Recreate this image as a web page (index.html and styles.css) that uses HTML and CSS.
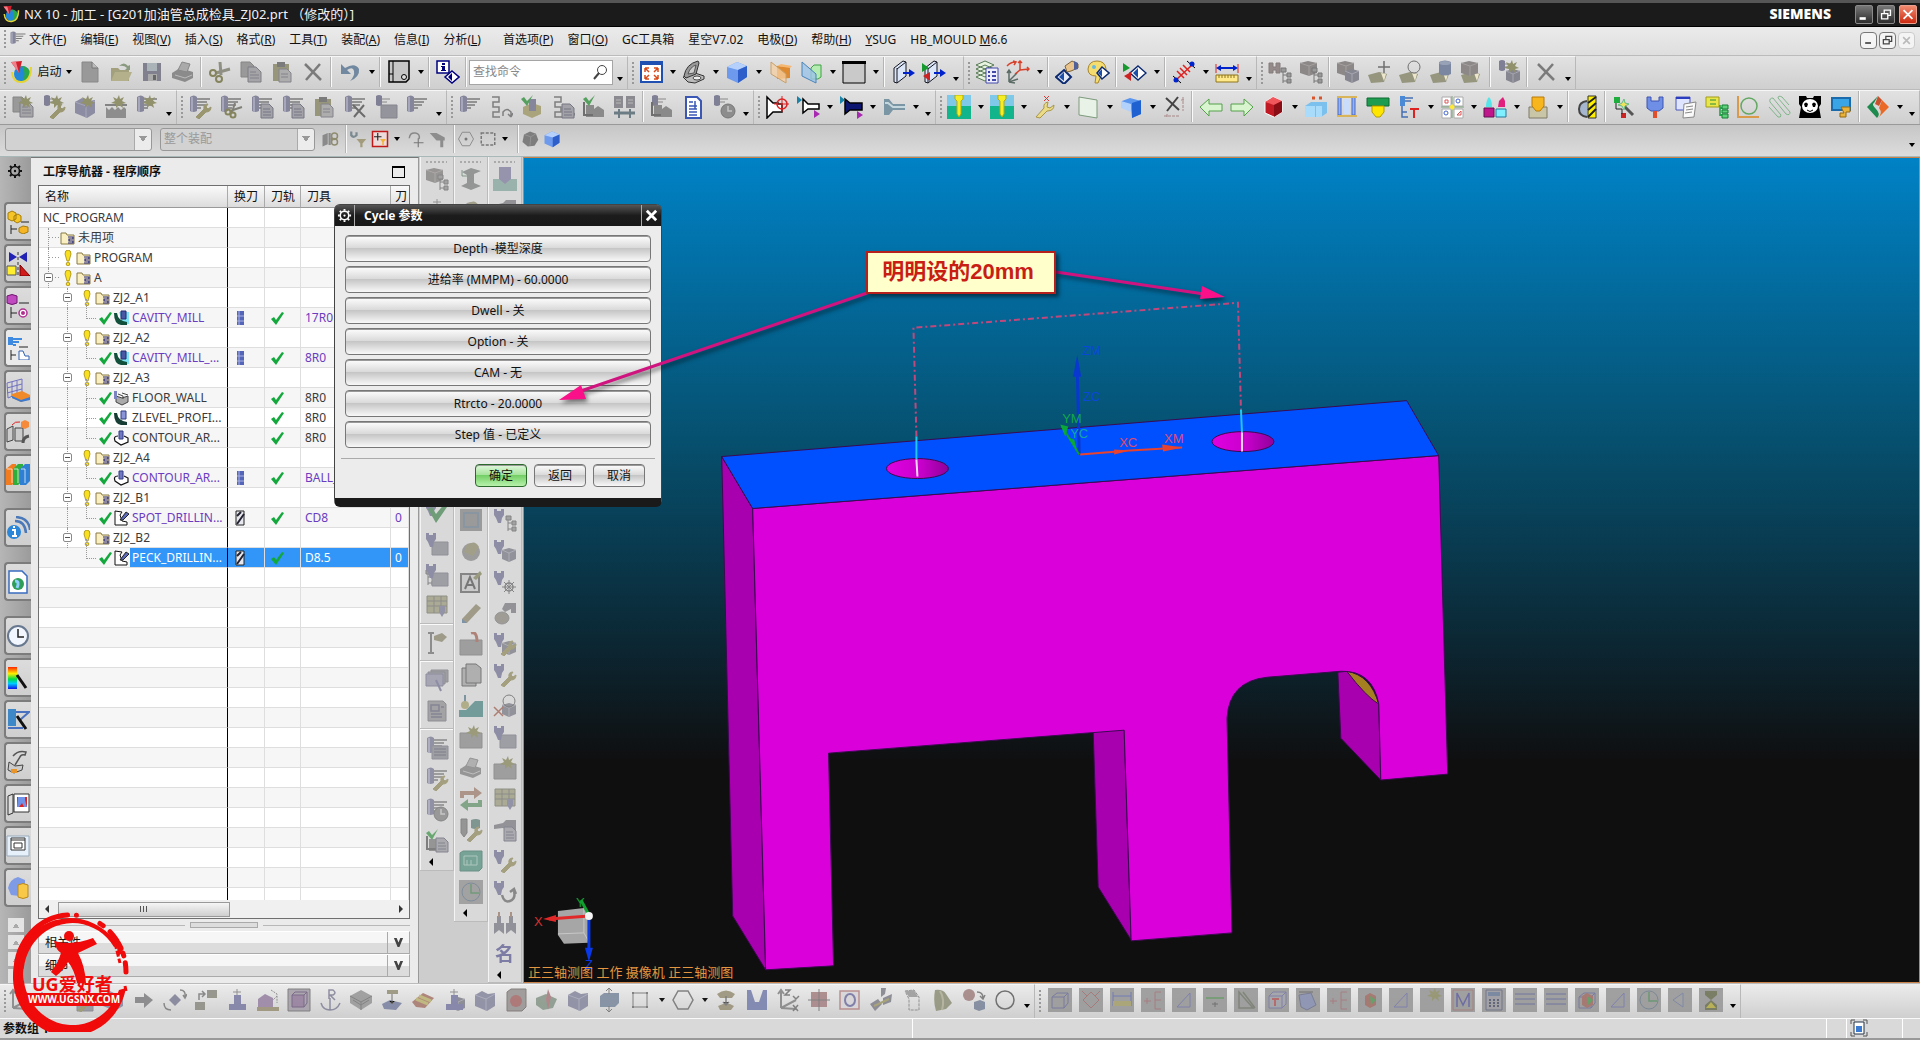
FILE: index.html
```html
<!DOCTYPE html>
<html lang="zh-CN">
<head>
<meta charset="utf-8">
<title>NX 10 - 加工</title>
<link rel="stylesheet" href="styles.css">
</head>
<body>

<!-- icon parts, several can be stacked in one svg -->
<svg class="defs" aria-hidden="true">
<defs>
<linearGradient id="sky" x1="0" y1="0" x2="0" y2="1"><stop offset="0" stop-color="#0082c6"/><stop offset=".34" stop-color="#06506f"/><stop offset=".73" stop-color="#0f0f10"/><stop offset="1" stop-color="#0f0f0f"/></linearGradient>
<linearGradient id="hole" x1="0" y1="0" x2="1" y2="0"><stop offset="0" stop-color="#e000e0"/><stop offset=".55" stop-color="#c800cc"/><stop offset="1" stop-color="#90009a"/></linearGradient>
<linearGradient id="rainbow" x1="0" y1="0" x2="0" y2="1"><stop offset="0" stop-color="#f20"/><stop offset=".3" stop-color="#fe0"/><stop offset=".55" stop-color="#0d4"/><stop offset=".75" stop-color="#0cf"/><stop offset="1" stop-color="#11e"/></linearGradient>

<symbol id="nx" viewBox="0 0 24 24"><circle cx="13" cy="14" r="8" fill="#2488d8"/><path d="M13 6a8 8 0 0 1 0 16q5-8 0-16z" fill="#2aa84a"/><path d="M3 12q1 11 10 10T22 7" fill="none" stroke="#e6d437" stroke-width="2"/><path d="M2 2l11-1-3 12z" fill="#d11f2b"/><path d="M2 2l5 0 3 11z" fill="#f0808a"/></symbol>
<symbol id="new" viewBox="0 0 24 24"><path d="M4 2h10l6 6v14H4z" fill="#999" stroke="#888"/><path d="M14 2v6h6" fill="#bbb" stroke="#777"/></symbol>
<symbol id="open" viewBox="0 0 24 24"><path d="M2 8h7l2 2h9v11H2z" fill="#a3a07e"/><path d="M2 21l4-9h17l-4 9z" fill="#b3b08b"/><path d="M10 6q5-5 9 0l2-1v5h-5l2-2q-3-3-8-2z" fill="#8a9a80"/></symbol>
<symbol id="save" viewBox="0 0 24 24"><path d="M3 3h18v18H3z" fill="#80808e"/><path d="M7 3h10v8H7z" fill="#aab4b8"/><path d="M8 14h9v7H8z" fill="#aaa"/><path d="M13 15h3v5h-3z" fill="#666"/></symbol>
<symbol id="print" viewBox="0 0 24 24"><path d="M1 13l8-5 13 4v6l-8 4-13-4z" fill="#8b8b8b"/><path d="M7 10l4-8 8 2-3 8z" fill="#aaa" stroke="#888"/><path d="M4 15l10 3 7-3" stroke="#bbb" fill="none"/></symbol>
<symbol id="cut" viewBox="0 0 24 24"><path d="M12 2l1 13M22 9L8 13" stroke="#8f8f84" stroke-width="3"/><circle cx="5" cy="13" r="3" fill="none" stroke="#85845f" stroke-width="2"/><circle cx="11" cy="19" r="3" fill="none" stroke="#85845f" stroke-width="2"/></symbol>
<symbol id="copy" viewBox="0 0 24 24"><path d="M2 2h9l4 4v11H2z" fill="#999" stroke="#858585"/><path d="M9 7h8l5 5v10H9z" fill="#a5a5a8" stroke="#7d7d85"/><path d="M11 12h6M11 15h9M11 18h9" stroke="#80808a"/></symbol>
<symbol id="paste" viewBox="0 0 24 24"><path d="M3 4h16v17H3z" fill="#98967a"/><path d="M7 2h8v5H7z" fill="#7b7b7b"/><path d="M9 9h8l4 4v9H9z" fill="#adadad" stroke="#84848c"/><path d="M11 14h7M11 17h7" stroke="#84848c"/></symbol>
<symbol id="del" viewBox="0 0 24 24"><path d="M4 4l16 16M19 4L5 20" stroke="#7b7b7b" stroke-width="2.500"/></symbol>
<symbol id="undo" viewBox="0 0 24 24"><path d="M3 4v10h10L9 10q6-4 7 1 1 5-4 10 10-4 9-12Q17 2 7 8z" fill="#7189a0"/></symbol>
<symbol id="role" viewBox="0 0 24 24"><path d="M2 1h20v18l-3 3H2z" fill="#c6c6c6" stroke="#000" stroke-width="1.500"/><path d="M6 1v21M2 14h4" stroke="#000"/><circle cx="17" cy="17" r="2.500" fill="#ddd" stroke="#000"/></symbol>
<symbol id="info" viewBox="0 0 24 24"><path d="M1 1h12v12H1z" fill="#fff" stroke="#00007f" stroke-width="1.500"/><path d="M6 3h3v2H6zM5 6h4v4h1v1H5v-1h1V7H5z" fill="#00007f"/><path d="M16 11l7 6-7 6-7-6z" fill="#fff" stroke="#00007f" stroke-width="1.500"/><path d="M16 13v8l-4-4z" fill="#00007f"/></symbol>
<symbol id="fit" viewBox="0 0 24 24"><path d="M2 2h21v20H2z" fill="#fff" stroke="#1f4fb0" stroke-width="2"/><path d="M1 1h23v4H1z" fill="#1f4fb0"/><path d="M6 8h4M6 8v4M19 8h-4M19 8v4M6 19h4M6 19v-4M19 19h-4M19 19v-4M6 8l4 4M19 8l-4 4M6 19l4-4M19 19l-4-4" stroke="#d84a1a" stroke-width="1.500"/></symbol>
<symbol id="orient" viewBox="0 0 24 24"><path d="M1 17l12-4 9 3v3l-9 4-7-1z" fill="#bbb" stroke="#333"/><path d="M2 16Q4 4 16 1l1 2-3 11-10 4z" fill="#999" stroke="#333"/><path d="M6 14q2-7 8-9l-2 8z" fill="#ccc" stroke="#555"/><ellipse cx="15" cy="18" rx="4" ry="2" fill="#eee" stroke="#444"/></symbol>
<symbol id="cube" viewBox="0 0 24 24"><path d="M2 7l10-5 10 4v11l-9 6-11-5z" fill="#6d9aec"/><path d="M2 7l11 3 9-4-10-4z" fill="#b5d0fb"/><path d="M13 10l9-4v11l-9 6z" fill="#2e5ec9"/></symbol>
<symbol id="planeo" viewBox="0 0 24 24"><path d="M9 6l13 1v11l-13 1z" fill="#dd8a30"/><path d="M9 6l4-2 11 2-2 2z" fill="#f4b873"/><path d="M3 2l15 12v9L3 14z" fill="#f5cfa0" fill-opacity=".75" stroke="#c9a06a"/></symbol>
<symbol id="planeg" viewBox="0 0 24 24"><path d="M12 8l3-3h7v12l-3 2h-7z" fill="#b4ecb2" stroke="#3fa047"/><path d="M3 2l14 12v9L3 16z" fill="#9cc4e8" fill-opacity=".8" stroke="#4a83b8"/></symbol>
<symbol id="wbox" viewBox="0 0 24 24"><path d="M1 2h22v21H1z" fill="#c9c9c9" stroke="#000"/><path d="M0 1h24v3H0z" fill="#000"/></symbol>
<symbol id="door" viewBox="0 0 24 24"><path d="M3 8l9-7 3 1v14l-9 7-3-1z" fill="#dbe6f8" stroke="#14141e"/><path d="M6 8v15M6 9l9-7" stroke="#14141e" fill="none"/><path d="M12 13h8" stroke="#0022cc" stroke-width="2"/><path d="M18 9l6 4-6 4z" fill="#0022cc"/></symbol>
<symbol id="rg" viewBox="0 0 24 24"><path d="M0 3l7 5-7 4z" fill="#169a2e"/><path d="M8 12v9l-7-5z" fill="#c22"/></symbol>
<symbol id="layers" viewBox="0 0 24 24"><path d="M1 5l9-4 9 4-9 4zM1 9l9-4 9 4-9 4zM1 13l9-4 9 4-9 4zM1 17l9-4 9 4-9 4z" fill="#e8f3e0" stroke="#577a55"/><path d="M11 8h12v15H11z" fill="#eef" stroke="#4449a8"/><path d="M13 12h2M17 12h4M13 16h2M17 16h4M13 20h2M17 20h4" stroke="#4449a8" stroke-width="2"/></symbol>
<symbol id="csys" viewBox="0 0 24 24"><path d="M3 22V11M3 22l9-3M3 22l6 1M1 13l2-3 2 3M3 21l8-8" stroke="#5b6b66" stroke-width="1.500" fill="none"/><path d="M14 10V1M14 10l9-1M14 10l-5 4M12 3l2-2 2 2M21 7l2 2-2 2M1 6q4-4 8-4M7 1l3 1-2 3" stroke="#d8412b" stroke-width="1.500" fill="none"/></symbol>
<symbol id="diam" viewBox="0 0 24 24"><path d="M15 6l8 7-8 7-8-7z" fill="#fff" stroke="#0b2a70" stroke-width="1.500"/><path d="M15 8v10l-5-5z" fill="#1d4ea8"/></symbol>
<symbol id="handd" viewBox="0 0 24 24"><path d="M9 10l7 7-7 7-8-7z" fill="#e6edf8" stroke="#0b2a70" stroke-width="2"/><path d="M9 12v9l-5-4z" fill="#1d4ea8"/><path d="M10 6l7-5 6 3v4l-7 3-4 1z" fill="#e9c48c" stroke="#7d6136"/><path d="M19 1l4 2v6l-4 1z" fill="#51629a"/></symbol>
<symbol id="head" viewBox="0 0 24 24"><path d="M2 9q1-8 9-8t9 8q0 5-5 7l-3 7H9l1-7q-8 0-8-7z" fill="#f5dc6e" stroke="#a7852d"/><path d="M16 7l7 6-7 6-5-6z" fill="#fff" stroke="#0b2a70" stroke-width="1.500"/><path d="M16 9v8l-4-4z" fill="#1d4ea8"/><circle cx="8" cy="7" r="2" fill="#68b9e0"/></symbol>
<symbol id="dist" viewBox="0 0 24 24"><path d="M4 20L20 5" stroke="#d22" stroke-width="1.500"/><path d="M5 11l7 7M8 8l7 7M11 5l7 7" stroke="#d22" stroke-width="1.500"/><path d="M1 16l8 7M15 1l8 7" stroke="#000"/><circle cx="4" cy="20" r="2.500" fill="#0022cc"/><circle cx="20" cy="4" r="2.500" fill="#0022cc"/></symbol>
<symbol id="ruler" viewBox="0 0 24 24"><path d="M1 4v9M23 4v9" stroke="#d22"/><path d="M3 8h18" stroke="#0022cc" stroke-width="2"/><path d="M1 8l5-3v6zM23 8l-5-3v6z" fill="#0022cc"/><path d="M1 15h22v7H1z" fill="#ffe98a" stroke="#8d741c"/><path d="M4 15v3M7 15v3M10 15v3M13 15v3M16 15v3M19 15v3" stroke="#8d741c"/></symbol>

<symbol id="star" viewBox="0 0 24 24"><path d="M15 0l1 4 4-2-2 4 4 2-4 1 1 4-4-3-3 3v-4l-5-1 4-2-2-4 4 2z" fill="#91916c"/></symbol>
<symbol id="tool" viewBox="0 0 24 24"><path d="M2 2q4-3 7 0v14q-4 2-7 0z" fill="#85859c"/><path d="M4 2v15" stroke="#a7a7bb" stroke-width="2"/><path d="M9 4h13M9 7h10M9 10h8M9 13h4" stroke="#7b7b7b" stroke-width="1.500"/></symbol>
<symbol id="tools" viewBox="0 0 24 24"><path d="M2 1q3-2 6 0v9q-3 2-6 0z" fill="#7f7f96"/><path d="M8 4h8M8 7h5" stroke="#888"/></symbol>
<symbol id="box" viewBox="0 0 24 24"><path d="M7 10h16v13H7z" fill="#94949c" stroke="#85858e"/></symbol>
<symbol id="lines" viewBox="0 0 24 24"><path d="M9 13h12M9 16h12M9 19h12" stroke="#70707a"/></symbol>
<symbol id="dcs" viewBox="0 0 24 24"><path d="M11 9h8l4 4v10H11z" fill="#a2a2a8" stroke="#777784"/><path d="M13 14h7M13 17h8M13 20h8" stroke="#777784"/></symbol>
<symbol id="clk" viewBox="0 0 24 24"><circle cx="16" cy="16" r="7" fill="#8d8d8d" stroke="#777"/><path d="M16 11v5h4" stroke="#c4c4c4" fill="none" stroke-width="1.500"/></symbol>
<symbol id="wr" viewBox="0 0 24 24"><path d="M8 22l8-8q-1-5 4-5l-2 3 2 2 3-2q0 5-5 5l-7 7z" fill="#9a9670" stroke="#9a9670"/></symbol>
<symbol id="scs" viewBox="0 0 24 24"><path d="M16 8l-3 9M23 12l-12 4" stroke="#808078" stroke-width="2"/><circle cx="9" cy="17" r="2.500" fill="none" stroke="#85845f" stroke-width="2"/><circle cx="14" cy="20" r="2.500" fill="none" stroke="#85845f" stroke-width="2"/></symbol>
<symbol id="xs" viewBox="0 0 24 24"><path d="M10 10l12 12M21 10L11 22" stroke="#6c6c6c" stroke-width="2"/></symbol>
<symbol id="xr" viewBox="0 0 24 24"><path d="M1 13l9 9M10 13l-9 9" stroke="#a86f62" stroke-width="1.500"/></symbol>
<symbol id="chk" viewBox="0 0 24 24"><path d="M1 4l3-2 3 4 6-6-6 11z" fill="#55a05e"/></symbol>
<symbol id="chkb" viewBox="0 0 24 24"><path d="M3 8l4-2 4 7 9-11 2 4-11 16z" fill="#5d9368"/></symbol>
<symbol id="holder" viewBox="0 0 24 24"><path d="M1 1h3v2h4V1h3v6l-2 3-1 5H5l-2-5-2-3z" fill="#80809e"/></symbol>
<symbol id="tree" viewBox="0 0 24 24"><path d="M3 9v13M3 14h4M3 20h4" stroke="#777" fill="none"/><path d="M1 7h5v4H1zM7 12h4v4H7zM7 18h4v4H7z" fill="#999" stroke="#777"/></symbol>
<symbol id="treer" viewBox="0 0 24 24"><path d="M15 11v12M15 15h4M15 21h4" stroke="#777" fill="none"/><path d="M13 8h5v4h-5zM19 13h4v4h-4zM19 19h4v4h-4z" fill="#999" stroke="#777"/></symbol>
<symbol id="blk" viewBox="0 0 24 24"><path d="M1 3l8-2 9 2v10l-8 3-9-3z" fill="#8c8888"/><path d="M1 3l9 3 8-3M10 6v10" stroke="#a5a0a0" fill="none"/></symbol>
<symbol id="blkr" viewBox="0 0 24 24"><path d="M9 11l7-2 7 2v9l-7 3-7-3z" fill="#868690"/><path d="M9 11l7 3 7-3M16 14v9" stroke="#a6a6b0" fill="none"/></symbol>
<symbol id="duo" viewBox="0 0 24 24"><path d="M1 3h4v4h3V3h4v10H8v-3H5v3H1z" fill="#948a8a" stroke="#857c7c"/></symbol>
<symbol id="tag" viewBox="0 0 24 24"><path d="M1 15l11-3 8 2-3 8-13 1z" fill="#96957e"/><path d="M14 13l5 1-2 7z" fill="#ece6cc"/></symbol>
<symbol id="plus" viewBox="0 0 24 24"><path d="M17 1v12M11 7h12" stroke="#707070" stroke-width="1.500"/></symbol>
<symbol id="circ" viewBox="0 0 24 24"><circle cx="16" cy="7" r="6" fill="none" stroke="#707070"/></symbol>
<symbol id="cyl" viewBox="0 0 24 24"><path d="M10 2q6-3 12 0v12q-6 3-12 0z" fill="#7b86a0"/><ellipse cx="16" cy="3" rx="6" ry="2" fill="#98a2b6"/></symbol>
<symbol id="snake" viewBox="0 0 24 24"><path d="M3 2h7v5H4v5h6v5H4v5h7M14 21v-4q4-5 8 0v4M22 22l-3-3M22 22l2-4" stroke="#7f7f7f" stroke-width="1.500" fill="none"/></symbol>
<symbol id="arch" viewBox="0 0 24 24"><path d="M3 12l9-4 9 3v8l-9 4-9-4z" fill="#aaa47c"/><path d="M9 4h7v12H9z" fill="#85859c"/></symbol>
<symbol id="saw" viewBox="0 0 24 24"><path d="M2 12l3 3 3-3 3 3 3-3 3 3 3-3 2 2v9H2z" fill="#8d8d8d"/><path d="M1 10h22" stroke="#666" stroke-width="1.500"/></symbol>
<symbol id="mach" viewBox="0 0 24 24"><path d="M4 10h8v4l4-3 6 4v7H4z" fill="#8a8a8a"/><path d="M2 7v13h9" stroke="#6f6f6f" fill="none" stroke-width="2"/></symbol>
<symbol id="docs2" viewBox="0 0 24 24"><path d="M1 1h9v12H1zM13 1h9v12h-9z" fill="#8a8a90"/><path d="M3 5h5M3 8h5M15 5h5M15 8h5" stroke="#b8b8b8"/><path d="M1 18h21" stroke="#6c7c84" stroke-width="3"/><path d="M6 14v9M17 14v9" stroke="#6c7c84" stroke-width="2"/></symbol>
<symbol id="docb" viewBox="0 0 24 24"><path d="M5 2h11l4 4v17H5z" fill="#fff" stroke="#3a57b5" stroke-width="2"/><path d="M8 7h4M8 11h8M8 14h8M8 17h8M8 20h8M14 6v8" stroke="#3a57b5" stroke-width="1.500"/></symbol>
<symbol id="funnel" viewBox="0 0 24 24"><path d="M2 2v21l6-6h9V9h-4V8H8z" fill="#fff" stroke="#000" stroke-width="1.500"/></symbol>
<symbol id="target" viewBox="0 0 24 24"><circle cx="17" cy="9" r="5" fill="none" stroke="#d22" stroke-width="1.500"/><path d="M17 1v16M9 9h15" stroke="#d22"/></symbol>
<symbol id="funnel2" viewBox="0 0 24 24"><path d="M7 4v14l5-4h11V9H12z" fill="#fff" stroke="#000" stroke-width="1.500"/><path d="M1 1l5 4-5 4z" fill="#1a83a8"/><path d="M18 15l6 4-6 4z" fill="#a92ab2"/></symbol>
<symbol id="funnel3" viewBox="0 0 24 24"><path d="M6 4v15l5-4h12V8H11z" fill="#0c1670" stroke="#000" stroke-width="1.500"/><path d="M1 1l5 4-5 4z" fill="#1a83a8"/><path d="M18 16l6 4-6 4z" fill="#a92ab2"/></symbol>
<symbol id="spind" viewBox="0 0 24 24"><path d="M2 4h5l4 5h12v6H11l-4 5H2z" fill="#7a95a3"/><path d="M3 8h3l5 4h12" stroke="#c6d8df" stroke-width="2" fill="none"/></symbol>
<symbol id="drill" viewBox="0 0 24 24"><path d="M0 0h24v11H0z" fill="#7ec8ea"/><path d="M0 11h24v13H0z" fill="#12b58b"/><path d="M8 0h8v4l-2 2v13l-2 3-2-3V6L8 4z" fill="#f5ee25" stroke="#b8a90c"/></symbol>
<symbol id="wry" viewBox="0 0 24 24"><path d="M3 22l8-9q-1-5 4-6l-1 5 3 1 4-3q0 6-7 6l-7 7z" fill="#eadb86" stroke="#a8954a"/><path d="M11 1l5 5M16 1l-5 5" stroke="#d33"/></symbol>
<symbol id="panel" viewBox="0 0 24 24"><path d="M3 2l18 3v18l-18-3z" fill="#e8f2e6" stroke="#7d9a7d"/></symbol>
<symbol id="shapes" viewBox="0 0 24 24"><path d="M3 6l8-3 11 3v13l-9 4-1-9-9-3z" fill="#5a95ee"/><path d="M13 8l9-3v14l-9 4z" fill="#1f61d0"/><path d="M2 6l10 3v8l-10-4z" fill="#b3d2fb"/></symbol>
<symbol id="nox" viewBox="0 0 24 24"><path d="M4 3l13 12M16 2L5 16" stroke="#444" stroke-width="2"/><path d="M21 2v14M19 5h4M2 21h16M5 19v4" stroke="#a88" stroke-dasharray="3 1"/></symbol>
<symbol id="arrl" viewBox="0 0 24 24"><path d="M1 12l9-8v5h13v7H10v5z" fill="#d9f5cf" stroke="#55a04a"/></symbol>
<symbol id="arrr" viewBox="0 0 24 24"><path d="M23 12l-9-8v5H1v7h13v5z" fill="#d9f5cf" stroke="#55a04a"/></symbol>
<symbol id="cuber" viewBox="0 0 24 24"><path d="M4 7l8-5 9 4v11l-8 5-9-4z" fill="#c11a24" stroke="#fff"/><path d="M4 7l9 3 8-4-9-4z" fill="#f0565c"/><path d="M13 10l8-4v11l-8 5z" fill="#8a0c14"/></symbol>
<symbol id="boxb" viewBox="0 0 24 24"><path d="M1 11l6-4h16v11l-6 4H1z" fill="#7cc0ee"/><path d="M1 11h10v11H1zM12 11h6v11h-6z" fill="#a9dcfa"/><path d="M8 3h3M15 3h3" stroke="#d9542b" stroke-width="3"/></symbol>
<symbol id="frame" viewBox="0 0 24 24"><path d="M3 2h3v18H3zM17 2h3v18h-3z" fill="#8eb4f2" stroke="#4a66c9"/><path d="M2 2h20M2 21h20" stroke="#d8b45a" stroke-width="2"/><path d="M9 4h6v15H9z" fill="#c9dcfb"/></symbol>
<symbol id="mill" viewBox="0 0 24 24"><path d="M1 3h22v8H1z" fill="#1e9c50" stroke="#0e6a33"/><path d="M6 11h12v6l-4 5h-4l-4-5z" fill="#ffe600" stroke="#b49c00"/></symbol>
<symbol id="tooly" viewBox="0 0 24 24"><path d="M3 1h5v10H3z" fill="#4a89d6"/><path d="M8 3h8M8 6h6M5 11v11h6M5 17h5" stroke="#4570b5" fill="none" stroke-width="1.500"/><path d="M13 14h9M17 14v9" stroke="#d22" stroke-width="2"/></symbol>
<symbol id="quad" viewBox="0 0 24 24"><path d="M2 2h9v9H2zM14 2h9v9h-9zM2 14h9v9H2zM14 14h9v9h-9z" fill="#fff" stroke="#aaa"/><path d="M5 5h3v3H5zM17 20l4-4v4z" fill="none" stroke="#d55"/><circle cx="18" cy="6" r="2" fill="none" stroke="#46c"/><circle cx="6" cy="18" r="2" fill="none" stroke="#46c"/><path d="M12 1v22M1 12h23" stroke="#7aa07a"/><path d="M12 9l3 3-3 3-3-3z" fill="#ffe93a"/></symbol>
<symbol id="pens" viewBox="0 0 24 24"><path d="M1 13h10v9H1z" fill="#c0168c" stroke="#601050"/><path d="M13 14h10v8H13z" fill="#7ff0ff" stroke="#26799a"/><path d="M3 12q0-7 3-10 3 3 3 10z" fill="#55e4ea"/><path d="M15 12l1-6 4-4 2 4v6z" fill="#e0207c"/></symbol>
<symbol id="press" viewBox="0 0 24 24"><path d="M3 12h18v11H3z" fill="#c9c6a8" stroke="#7f7b66"/><path d="M6 2h12v9l-4 5h-4l-4-5z" fill="#f7b51e" stroke="#b97a08"/></symbol>
<symbol id="hatch" viewBox="0 0 24 24"><path d="M13 1h8v22h-8z" fill="#fff000" stroke="#333"/><path d="M13 8l8-6M13 15l8-7M13 22l8-8" stroke="#222" stroke-width="2"/><path d="M12 6q-8 1-8 8t8 8" fill="#a5b6ce" stroke="#444" stroke-width="2"/></symbol>
<symbol id="wand" viewBox="0 0 24 24"><path d="M2 2h6v6H2z" fill="#1fae3e"/><path d="M9 18h5v5H9z" fill="#c22"/><path d="M4 8v6h6v5" fill="none" stroke="#222"/><path d="M12 11l9 9" stroke="#555" stroke-width="3"/><path d="M12 4l1 4 4 1-4 2-1 4-2-4-4-1 4-2z" fill="#efe35e" stroke="#6b8"/></symbol>
<symbol id="plug" viewBox="0 0 24 24"><path d="M4 2h4v4h8V2h4v11l-4 3H8l-4-3z" fill="#6f8ee6" stroke="#3e55b0"/><path d="M10 16h4v7h-4z" fill="#e04e2c"/></symbol>
<symbol id="notes" viewBox="0 0 24 24"><path d="M2 2h14v13H2z" fill="#dfe4ff" stroke="#4a56b8"/><path d="M2 3h14" stroke="#2a3cc0" stroke-width="2"/><path d="M10 9l12-2-2 15-11 1z" fill="#fafafa" stroke="#888"/><path d="M12 12l7-1M12 15l7-1M11 18l7-1" stroke="#888"/></symbol>
<symbol id="yg" viewBox="0 0 24 24"><path d="M1 2h13v10H1z" fill="#e9e64a" stroke="#a09b1a"/><path d="M5 5h6M5 9h6" stroke="#2a8a3a"/><path d="M15 10v11M15 13h3M15 20h3" stroke="#18a040" stroke-width="1.500"/><path d="M17 10h6v4h-6zM17 15h6v3h-6zM17 19h6v4h-6z" fill="#5fd07a" stroke="#128035"/></symbol>
<symbol id="ring" viewBox="0 0 24 24"><path d="M2 1v21h21" stroke="#d99a4a" stroke-width="2" fill="none"/><circle cx="13" cy="11" r="8" fill="none" stroke="#62a862" stroke-width="1.500"/></symbol>
<symbol id="coil" viewBox="0 0 24 24"><path d="M2 12l9 10q3 1 3-2L3 7q-1-4 3-4l13 16q4 2 4-2L11 3q0-3 4-1l7 8" stroke="#7fb489" fill="none"/></symbol>
<symbol id="panda" viewBox="0 0 24 24"><path d="M1 1h7l1 2h6l1-2h7v8l-2 3 2 11H1l2-11-2-3z" fill="#000"/><ellipse cx="12" cy="11" rx="8" ry="7" fill="#fff"/><path d="M6 9q2-3 4 0l-1 3H7zM14 9q2-3 4 0l-1 3h-2z" fill="#000"/><path d="M9 15q3 3 6 0" stroke="#000" fill="none"/></symbol>
<symbol id="mon" viewBox="0 0 24 24"><path d="M3 3h18v12H3z" fill="#39a5e6" stroke="#1b6aab" stroke-width="2"/><path d="M12 12h9v5h-4v5h-6v-4h4z" fill="#e9b23b" stroke="#94690f"/></symbol>
<symbol id="logo" viewBox="0 0 24 24"><path d="M12 1L1 12l10 11q4-4-1-9T8 8z" fill="#1d8a4e"/><path d="M16 5l7 7-11 11q5-5 1-10z" fill="#ea6a25"/><path d="M12 1l4 4-3 6-4-2z" fill="#c8502a"/></symbol>

<symbol id="arr" viewBox="0 0 24 24"><path d="M3 9h9V5l9 7-9 8v-5H3z" fill="#858588"/></symbol>
<symbol id="spin" viewBox="0 0 24 24"><path d="M6 12l6-6 6 6-6 6z" fill="#84849a"/><path d="M17 2q6 0 5 7M1 15q0 7 7 7M20 7l2 3 2-4" stroke="#808080" stroke-width="1.500" fill="none"/></symbol>
<symbol id="cpb" viewBox="0 0 24 24"><path d="M13 2h10v8H13zM1 14h10v8H1z" fill="#8f8f86"/><path d="M5 12V6h6M8 3l3 3-3 3" stroke="#808080" stroke-width="1.500" fill="none"/></symbol>
<symbol id="pede" viewBox="0 0 24 24"><path d="M4 16h17v6H4zM9 7h7v9H9z" fill="#8080a6"/><path d="M12 7V1M8 4h8" stroke="#888"/></symbol>
<symbol id="house" viewBox="0 0 24 24"><path d="M2 11l7-5 8 4v9H2z" fill="#9a86a6"/><path d="M1 19h22v4H1z" fill="#9c9378"/><path d="M15 2l6 4v9M21 8l-4 4" stroke="#888" fill="none" stroke-dasharray="2 1"/></symbol>
<symbol id="cage" viewBox="0 0 24 24"><path d="M1 1h22v22H1z" fill="#a6a0aa" stroke="#777"/><path d="M5 7h12v12H5z" fill="#96809e" stroke="#705f80"/><path d="M5 7l3-3h12v11l-3 4M17 7l3-3" fill="none" stroke="#705f80"/></symbol>
<symbol id="anchor" viewBox="0 0 24 24"><path d="M12 10v12M3 15q2 7 9 7t10-7M11 11V2h4q4 3 0 5h-3l5 5" stroke="#85859a" stroke-width="1.500" fill="none"/></symbol>
<symbol id="plates" viewBox="0 0 24 24"><path d="M1 8l11-6 11 6v7l-11 7-11-7z" fill="#9a9a9a"/><path d="M1 8l11 6 11-6M12 14v8M4 12l8 5 8-5" stroke="#7a7a7a" fill="none"/></symbol>
<symbol id="scan" viewBox="0 0 24 24"><path d="M2 16l8-4 12 3-6 7-12-1z" fill="#7d85a3"/><path d="M7 2h11v4H7z" fill="#98937b"/><path d="M12 6v10M9 13l3 3 3-3" stroke="#666"/></symbol>
<symbol id="ingot" viewBox="0 0 24 24"><path d="M1 14L12 5l11 5-9 10-9-1z" fill="#aa7c70"/><path d="M5 11l12 5M8 8l12 5" stroke="#bdb578" stroke-width="3"/></symbol>
<symbol id="gblk" viewBox="0 0 24 24"><path d="M2 7l7-4 6 3 7-1v13l-8 5-12-5z" fill="#8c8ca2"/><path d="M2 7l11 4 9-5M13 11v12" stroke="#a8a8bc" fill="none"/></symbol>
<symbol id="rblk" viewBox="0 0 24 24"><path d="M3 4l4-3h15v18l-4 4H3z" fill="#9a9696" stroke="#7c7474"/><circle cx="12" cy="13" r="6" fill="#a96f6f"/></symbol>
<symbol id="gcut" viewBox="0 0 24 24"><path d="M1 10l10-4 11 5-4 9-10 2-7-5z" fill="#8b9a8d"/><path d="M13 1l3 8-3 13-2-11z" fill="#ad7e82"/></symbol>
<symbol id="updn" viewBox="0 0 24 24"><path d="M3 8l4-3h15v10l-4 4H3z" fill="#7f8da0"/><path d="M12 0v6M12 18v6M9 3l3-3 3 3M9 21l3 3 3-3" stroke="#777" fill="none"/></symbol>
<symbol id="sel" viewBox="0 0 24 24"><path d="M5 5h14v14H5z" fill="none" stroke="#777"/><path d="M4 4h2v2H4zM18 4h2v2h-2zM4 18h2v2H4zM18 18h2v2h-2z" fill="#777"/></symbol>
<symbol id="hex" viewBox="0 0 24 24"><path d="M7 3h10l5 9-5 9H7l-5-9z" fill="none" stroke="#777" stroke-width="1.500"/></symbol>
<symbol id="vase" viewBox="0 0 24 24"><path d="M3 6q9-7 18 0l-3 4H6zM4 18l5-2h7l4 2-3 4H6z" fill="#9a937a"/><path d="M12 8v9M9 14l3 3 3-3" stroke="#777" stroke-width="1.500"/></symbol>
<symbol id="ublk" viewBox="0 0 24 24"><path d="M2 2h4l4 12h4l4-12h4v20H2z" fill="#7a83ae"/></symbol>
<symbol id="axes" viewBox="0 0 24 24"><path d="M5 20V3M5 20l15-8M5 20l15 1M2 6l3-4 3 4" stroke="#888" stroke-width="2" fill="none"/><path d="M9 2h5l-5 5h5M17 8l3 3 3-3M17 17l5 6M22 17l-5 6" stroke="#777" stroke-width="1.500" fill="none"/></symbol>
<symbol id="rsq" viewBox="0 0 24 24"><path d="M4 4h16v15H4z" fill="#a88688"/><path d="M12 1v22M1 12h22" stroke="#777"/></symbol>
<symbol id="osq" viewBox="0 0 24 24"><path d="M2 3h19v18H2z" fill="#d8d6d8" stroke="#b58888" stroke-width="1.500"/><ellipse cx="12" cy="12" rx="5" ry="6" fill="none" stroke="#7777a5" stroke-width="2"/></symbol>
<symbol id="junk" viewBox="0 0 24 24"><path d="M12 0h5l-1 6-4 3zM1 16l8-5 4 5-7 7zM14 10l9-4-1 8-8 3z" fill="#85858f"/><path d="M5 18l15-7" stroke="#a39e70" stroke-width="2"/></symbol>
<symbol id="wire" viewBox="0 0 24 24"><path d="M5 3l9-1 5 7v13H9V11z" fill="none" stroke="#888" stroke-dasharray="3 1"/><path d="M5 3l9-1 4 7H9z" fill="#9d9d9d"/></symbol>
<symbol id="cone" viewBox="0 0 24 24"><path d="M4 2q8-1 11 4l6 9-6 6-10 2q-3-9-1-21z" fill="#93947e"/><path d="M9 3q5 8 2 19" stroke="#b0b09a" fill="none" stroke-width="2"/></symbol>
<symbol id="conv" viewBox="0 0 24 24"><circle cx="7" cy="7" r="6" fill="#a48686"/><path d="M12 14l6-2 5 2v7l-6 2-5-2z" fill="#7d889c"/><path d="M15 4q6 0 6 6M18 8l3 3 2-4" stroke="#777" stroke-width="1.500" fill="none"/></symbol>
<symbol id="ell" viewBox="0 0 24 24"><circle cx="12" cy="12" r="9" fill="none" stroke="#666" stroke-width="1.500"/></symbol>
<symbol id="dk" viewBox="0 0 24 24"><path d="M0 0h24v24H0z" fill="#999"/></symbol>
<symbol id="pa" viewBox="0 0 24 24"><path d="M4 9h12v11H4zM4 9l5-4h11v10l-4 5M16 9l4-4" fill="none" stroke="#70709a"/></symbol>
<symbol id="pb" viewBox="0 0 24 24"><path d="M12 4l8 8-8 8-8-8zM3 3l5 5M21 3l-5 5" fill="none" stroke="#a07070"/></symbol>
<symbol id="pc" viewBox="0 0 24 24"><path d="M3 4v14M21 4v14M3 8h18" stroke="#6670b0" fill="none"/><path d="M3 13h18v5H3z" fill="#a5a170"/></symbol>
<symbol id="pd" viewBox="0 0 24 24"><path d="M3 13h7M6 10v6M14 4v17h6M14 12h6M14 4h6" stroke="#a07478" fill="none"/></symbol>
<symbol id="pe" viewBox="0 0 24 24"><path d="M5 19L18 5v14z" stroke="#7478a8" fill="none"/></symbol>
<symbol id="pf" viewBox="0 0 24 24"><path d="M3 10h18" stroke="#609460" stroke-width="1.500"/><path d="M12 14v5M9 16h6" stroke="#666"/></symbol>
<symbol id="ph" viewBox="0 0 24 24"><path d="M5 4v16h14zM9 4l12 16" fill="none" stroke="#777c70" stroke-width="1.500"/></symbol>
<symbol id="pt" viewBox="0 0 24 24"><path d="M4 8h13v12H4zM4 8l4-4h13v12l-4 4M17 8l4-4" fill="#a0a0a8" stroke="#7777a0"/><path d="M7 11h7M10 11v7" stroke="#b06060" stroke-width="2"/></symbol>
<symbol id="pn" viewBox="0 0 24 24"><path d="M3 7l12-2 5 12-9 5-6-3z" fill="#8890b0" stroke="#70748c"/><path d="M3 4h14" stroke="#666"/></symbol>
<symbol id="pp" viewBox="0 0 24 24"><path d="M7 8l5-3 6 3v9l-6 3-5-3z" fill="#a07068"/><path d="M12 8l6 4-5 5z" fill="#5b9a5e"/></symbol>
<symbol id="pm" viewBox="0 0 24 24"><path d="M2 2h20v20H2z" fill="none" stroke="#a07878"/><path d="M6 19V5l6 12 6-12v14" fill="none" stroke="#62629e" stroke-width="1.500"/></symbol>
<symbol id="pk" viewBox="0 0 24 24"><path d="M4 2h16v20H4z" fill="#9a9aa0" stroke="#666a80"/><path d="M6 4h12v4H6z" fill="#70809a"/><path d="M7 12h10M7 15h10M7 18h10" stroke="#555a70" stroke-dasharray="2 2" stroke-width="2"/></symbol>
<symbol id="pl" viewBox="0 0 24 24"><path d="M2 6h20M2 11h20M2 16h20" stroke="#666c9a"/></symbol>
<symbol id="pcl" viewBox="0 0 24 24"><circle cx="12" cy="12" r="9" fill="none" stroke="#708090"/><path d="M12 4v9h8" stroke="#60906a" fill="none" stroke-width="1.500"/></symbol>
<symbol id="ptr" viewBox="0 0 24 24"><path d="M15 5v14l-10-7z" fill="#9c9c9c" stroke="#7780a0"/></symbol>
<symbol id="hour" viewBox="0 0 24 24"><path d="M6 3h12v4l-6 5 6 5v5H6v-5l6-5-6-5z" fill="#6f7458"/><path d="M12 14l5 6H7z" fill="#b5ad4a"/></symbol>

<symbol id="mdown" viewBox="0 0 24 24"><path d="M0 12h24v12H0z" fill="#8fada5"/><path d="M6 0h12v12l-6 5-6-5z" fill="#8a88a5"/></symbol>
<symbol id="mspin" viewBox="0 0 24 24"><path d="M3 5l9-4 10 3-7 3v9l7 3-10 4-10-4 6-3V8z" fill="#888b8b"/><path d="M3 3v6h5" stroke="#6e8a78" fill="none"/></symbol>
<symbol id="sheet" viewBox="0 0 24 24"><path d="M2 2h20v17H2z" fill="#a3a28a" stroke="#848478"/><path d="M2 7h20M2 12h20M9 2v17M16 2v17" stroke="#80807c"/><path d="M14 12h6v6l-3 5-3-5z" fill="#8787a0"/></symbol>
<symbol id="flag" viewBox="0 0 24 24"><path d="M6 2v20M3 22h6M3 2h6" stroke="#808080" stroke-width="2"/><path d="M9 5l8-3 5 4-5 5-8-2z" fill="#94917c"/></symbol>
<symbol id="gun" viewBox="0 0 24 24"><path d="M1 7l9-2 3-3h10v10h-8l-5-2-9 1z" fill="#87878c"/></symbol>
<symbol id="gunr" viewBox="0 0 24 24"><path d="M12 2h11v10h-5V8l-6 3-3-3z" fill="#87878c"/><ellipse cx="9" cy="17" rx="7" ry="6" fill="#96918a" stroke="#888"/></symbol>
<symbol id="cards" viewBox="0 0 24 24"><path d="M6 2h17v12H6z" fill="#96969a" stroke="#85858c"/><path d="M3 4h17v12H3z" fill="#9a9aa0" stroke="#80808c"/><path d="M1 6h17v12H1z" fill="#9c9cae" stroke="#808094"/><path d="M11 12l5 11" stroke="#80809c" stroke-width="2"/></symbol>
<symbol id="rep" viewBox="0 0 24 24"><path d="M3 2h15l3 3v17H3z" fill="#9a9a9e" stroke="#848488"/><path d="M6 6h8v6H6zM6 15h11M6 18h11M16 8h3" fill="none" stroke="#77778a" stroke-width="1.500"/></symbol>
<symbol id="abox" viewBox="0 0 24 24"><path d="M2 4h18v18H2z" fill="#c9c9c9" stroke="#777" stroke-width="2"/><path d="M6 19l5-12 5 12M8 15h6" stroke="#666" stroke-width="2" fill="none"/><path d="M14 8l7-7 2 3-6 6z" fill="#8f906f"/></symbol>
<symbol id="pen" viewBox="0 0 24 24"><path d="M3 18L17 3l5 4L8 22H3z" fill="#95917a"/><path d="M3 18l5 4H3z" fill="#6d87a0"/></symbol>
<symbol id="ball" viewBox="0 0 24 24"><circle cx="12" cy="13" r="9" fill="#929292"/><path d="M8 6q8-6 12 2l-6 9-9-4z" fill="#99967c"/></symbol>
<symbol id="gball" viewBox="0 0 24 24"><path d="M4 6l8-4 8 3 3 8-5 8-9 1-7-6z" fill="#7d7d7d"/><path d="M4 6l9 3 7-4M13 9l-1 12" stroke="#999" fill="none"/></symbol>
<symbol id="pic" viewBox="0 0 24 24"><path d="M1 1h22v22H1z" fill="#909090"/><path d="M5 5h14v14H5z" fill="none" stroke="#7c8a98" stroke-width="2"/></symbol>
<symbol id="rarr" viewBox="0 0 24 24"><path d="M12 1q6-2 6 9" fill="none" stroke="#a87468" stroke-width="3"/></symbol>
<symbol id="full" viewBox="0 0 24 24"><path d="M1 8h22v15H1z" fill="#949494" stroke="#858585"/></symbol>
<symbol id="pgs" viewBox="0 0 24 24"><path d="M3 5h14v18H3z" fill="#aaa" stroke="#666"/><path d="M7 1h10l5 4v15H7z" fill="#a8a8a8" stroke="#666"/></symbol>
<symbol id="slope" viewBox="0 0 24 24"><path d="M0 23v-7h7L16 7h8v16z" fill="#62918e"/><path d="M6 1v10" stroke="#6c8a98" stroke-width="2"/><circle cx="6" cy="11" r="4" fill="#aaa67c"/></symbol>
<symbol id="swap" viewBox="0 0 24 24"><path d="M1 11V4h14V0l8 6-8 6V8H5v3z" fill="#a5897b"/><path d="M23 13v7H9v4l-8-6 8-6v4h10v-3z" fill="#739c7b"/></symbol>
<symbol id="bits" viewBox="0 0 24 24"><path d="M2 1h6v14l-3 4-3-4z" fill="#8a8a8a" stroke="#777"/><path d="M12 2q5-2 9 0v8q-5 2-9 0z" fill="#6f8a84"/></symbol>
<symbol id="gtab" viewBox="0 0 24 24"><path d="M1 4l3-2h19v17l-3 3H1z" fill="#67998b" stroke="#5a8478"/><path d="M5 7h13v9H5zM8 11v5M12 11v5" stroke="#a5c4b8" fill="none"/></symbol>
<symbol id="wheel" viewBox="0 0 24 24"><circle cx="16" cy="17" r="4" fill="none" stroke="#777" stroke-width="1.500"/><path d="M16 10v14M9 17h14M11 12l10 10M21 12L11 22" stroke="#777"/></symbol>
<symbol id="rota" viewBox="0 0 24 24"><path d="M9 15q2 8 8 6t4-10M17 12l4-3 2 5" stroke="#7b7b7b" stroke-width="2.500" fill="none"/></symbol>
<symbol id="twin" viewBox="0 0 24 24"><path d="M1 12h10v11l-5-4-5 4zM13 12h10v11l-5-4-5 4zM4 5h4v7H4zM16 5h4v7h-4z" fill="#85858f"/><path d="M6 1v5M18 1v5" stroke="#a48678" stroke-width="2"/></symbol>

<!-- tree icons, 16px -->
<symbol id="bang" viewBox="0 0 16 16"><path d="M5 4q0-4 3-4t3 4L9 11H7z" fill="#f8e020" stroke="#a58a10" stroke-width=".800"/><circle cx="8" cy="14" r="1.800" fill="#f8e020" stroke="#a58a10" stroke-width=".800"/></symbol>
<symbol id="fld" viewBox="0 0 16 16"><path d="M1 3h5l1 2h7v9H1z" fill="#f9efc0" stroke="#8a7a45"/><path d="M8 7h5v2H9v2h4v2H8" stroke="#23237a" fill="none" stroke-width="1.200"/></symbol>
<symbol id="ok" viewBox="0 0 16 16"><path d="M2 9l3-2 2 3 6-8 2 1-8 12z" fill="#12a83c"/></symbol>
<symbol id="cav" viewBox="0 0 16 16"><path d="M6 2h10v12h-6z" fill="#7fe4f4"/><path d="M1 3h3q1 8 10 9v3H8Q1 14 1 3z" fill="#12503c"/><path d="M8 1h5v8H8z" fill="#4957a5" stroke="#222c70"/></symbol>
<symbol id="zlv" viewBox="0 0 16 16"><path d="M1 3h3q1 8 10 9v3H8Q1 14 1 3z" fill="#173d34"/><path d="M8 1h5v8H8z" fill="#8a94d8" stroke="#333c80"/></symbol>
<symbol id="flr" viewBox="0 0 16 16"><path d="M3 6l6 2 6-2v6l-6 3-6-3z" fill="#aaa" stroke="#444"/><path d="M1 1h3v8H1z" fill="#7d85c0"/><path d="M5 4l5 2v3M9 3l6 2" stroke="#444" fill="none"/></symbol>
<symbol id="ctr" viewBox="0 0 16 16"><path d="M5 6Q0 6 2 11l6 4 7-3V8l-4-2" fill="#fff" stroke="#111" stroke-width="1.200"/><path d="M6 1h4v8H6z" fill="#7079c4" stroke="#333c80"/></symbol>
<symbol id="spt" viewBox="0 0 16 16"><path d="M2 1v14h12v-3l-5-1-2-6 2-3z" fill="#fff" stroke="#111"/><path d="M7 10l6-8 3 2-6 6z" fill="#5a6ab8" stroke="#222"/></symbol>
<symbol id="em" viewBox="0 0 16 16"><path d="M5 1h7v14H5z" fill="#5566b8"/><path d="M7 1v14M5 6h7M5 11h7" stroke="#a9b2e2"/></symbol>
<symbol id="dr" viewBox="0 0 16 16"><path d="M4 1h8v14H4z" fill="#e7e9ee" stroke="#222"/><path d="M5 14L12 4M5 6l4-4" stroke="#223" stroke-width="2"/></symbol>
<symbol id="gear" viewBox="0 0 16 16"><circle cx="8" cy="8" r="4.500" fill="none" stroke="currentColor" stroke-width="1.600"/><circle cx="8" cy="8" r="1.200" fill="currentColor"/><path d="M8 1v2M8 13v2M1 8h2M13 8h2M3 3l1.500 1.500M11.500 11.500L13 13M13 3l-1.500 1.500M4.500 11.500L3 13" stroke="currentColor" stroke-width="2"/></symbol>
</defs>
</svg>

<header class="titlebar">
  <svg class="i18"><use href="#nx"/></svg>
  <span class="caption">NX 10 - 加工 - [G201加油管总成检具_ZJ02.prt （修改的）]</span>
  <b class="brand">SIEMENS</b>
  <button class="win" aria-label="最小化"><svg viewBox="0 0 18 18"><path d="M4 12h7v3H4z" fill="#fff"/></svg></button>
  <button class="win" aria-label="还原"><svg viewBox="0 0 18 18"><path d="M4 8h7v6H4zM7 8V4h7v6h-3" fill="none" stroke="#fff" stroke-width="1.500"/></svg></button>
  <button class="win close" aria-label="关闭"><svg viewBox="0 0 18 18"><path d="M4 4l10 10M14 4L4 14" stroke="#fff" stroke-width="2"/></svg></button>
</header>

<nav class="menubar">
  <i class="grip"></i>
  <svg class="i18 menuicon"><use href="#tool"/></svg>
  <a href="#">文件(<u>F</u>)</a><a href="#">编辑(<u>E</u>)</a><a href="#">视图(<u>V</u>)</a><a href="#">插入(<u>S</u>)</a><a href="#">格式(<u>R</u>)</a><a href="#">工具(<u>T</u>)</a><a href="#">装配(<u>A</u>)</a><a href="#">信息(<u>I</u>)</a><a href="#" class="wide">分析(<u>L</u>)</a><a href="#">首选项(<u>P</u>)</a><a href="#">窗口(<u>O</u>)</a><a href="#">GC工具箱</a><a href="#">星空V7.02</a><a href="#">电极(<u>D</u>)</a><a href="#">帮助(<u>H</u>)</a><a href="#"><u>Y</u>SUG</a><a href="#">HB_MOULD <u>M</u>6.6</a>
  <span class="fill"></span>
  <button class="mdi" aria-label="最小化"><svg viewBox="0 0 18 18"><path d="M5 12h7" stroke="#444" stroke-width="2"/></svg></button>
  <button class="mdi" aria-label="还原"><svg viewBox="0 0 18 18"><path d="M4 8h7v5H4zM7 8V4h7v6h-3" fill="none" stroke="#444" stroke-width="1.500"/></svg></button>
  <button class="mdi off" aria-label="关闭"><svg viewBox="0 0 18 18"><path d="M5 5l8 8M13 5l-8 8" stroke="#bbb" stroke-width="2"/></svg></button>
</nav>

<div class="row">
  <div class="bar">
    <button class="start"><svg><use href="#nx"/></svg>启动<i class="car"></i></button>
    <button><svg><use href="#new"/></svg></button><button><svg><use href="#open"/></svg></button><button><svg><use href="#save"/></svg></button><button><svg><use href="#print"/></svg></button>
    <i class="sep"></i>
    <button><svg><use href="#cut"/></svg></button><button><svg><use href="#copy"/></svg></button><button><svg><use href="#paste"/></svg></button><button><svg><use href="#del"/></svg></button>
    <i class="sep"></i>
    <button class="dd"><svg><use href="#undo"/></svg></button>
    <i class="sep"></i>
    <button class="dd"><svg><use href="#role"/></svg></button>
    <i class="sep"></i>
    <button><svg><use href="#info"/></svg></button>
    <i class="sep"></i>
    <label class="find"><input type="text" placeholder="查找命令" aria-label="查找命令"><svg viewBox="0 0 16 16"><circle cx="10" cy="6" r="4.500" fill="none" stroke="#444"/><path d="M7 9l-5 6" stroke="#444" stroke-width="2"/></svg></label>
    <i class="more"></i>
  </div>
  <div class="bar">
    <button class="dd"><svg><use href="#fit"/></svg></button><button class="dd"><svg><use href="#orient"/></svg></button><button class="dd"><svg><use href="#cube"/></svg></button><button><svg><use href="#planeo"/></svg></button><button class="dd"><svg><use href="#planeg"/></svg></button><button class="dd"><svg><use href="#wbox"/></svg></button>
    <i class="sep"></i>
    <button><svg><use href="#door"/></svg></button><button><svg><use href="#door"/><use href="#rg"/></svg></button>
    <i class="more"></i>
  </div>
  <div class="bar">
    <button><svg><use href="#layers"/></svg></button><button class="dd"><svg><use href="#csys"/></svg></button>
    <i class="sep"></i>
    <button><svg><use href="#handd"/></svg></button><button><svg><use href="#head"/></svg></button>
    <i class="sep"></i>
    <button class="dd"><svg><use href="#diam"/><use href="#rg"/></svg></button>
    <i class="sep"></i>
    <button class="dd"><svg><use href="#dist"/></svg></button><button><svg><use href="#ruler"/></svg></button>
    <i class="more"></i>
  </div>
  <div class="bar last">
    <button><svg><use href="#duo"/><use href="#treer"/></svg></button><button><svg><use href="#blk"/><use href="#treer"/></svg></button>
    <i class="sep"></i>
    <button><svg><use href="#blk"/><use href="#blkr"/></svg></button><button><svg><use href="#tag"/><use href="#plus"/></svg></button><button><svg><use href="#tag"/><use href="#circ"/></svg></button><button><svg><use href="#tag"/><use href="#cyl"/></svg></button><button><svg><use href="#tag"/><use href="#blk"/></svg></button>
    <i class="sep"></i>
    <button><svg><use href="#tools"/><use href="#blkr"/><use href="#star"/></svg></button>
    <i class="sep"></i>
    <button><svg><use href="#del"/></svg></button>
    <i class="more"></i>
  </div>
</div>

<div class="row">
  <div class="bar">
    <button><svg><use href="#copy"/><use href="#star"/></svg></button><button><svg><use href="#tools"/><use href="#wr"/><use href="#star"/></svg></button><button><svg><use href="#gblk"/><use href="#star"/></svg></button><button><svg><use href="#saw"/><use href="#star"/></svg></button><button><svg><use href="#tool"/><use href="#star"/></svg></button>
    <i class="more"></i>
  </div>
  <div class="bar">
    <button><svg><use href="#tool"/><use href="#wr"/></svg></button><button><svg><use href="#tool"/><use href="#scs"/></svg></button><button><svg><use href="#tool"/><use href="#dcs"/></svg></button><button><svg><use href="#tool"/><use href="#dcs"/></svg></button><button><svg><use href="#paste"/></svg></button><button><svg><use href="#tool"/><use href="#xs"/></svg></button><button><svg><use href="#tools"/><use href="#box"/></svg></button><button><svg><use href="#tool"/></svg></button>
    <i class="more"></i>
  </div>
  <div class="bar">
    <button><svg><use href="#tool"/></svg></button><button><svg><use href="#snake"/></svg></button><button><svg><use href="#arch"/><use href="#chk"/></svg></button><button><svg><use href="#snake"/><use href="#dcs"/></svg></button><button><svg><use href="#mach"/><use href="#chk"/></svg></button><button><svg><use href="#docs2"/></svg></button>
    <i class="sep"></i>
    <button><svg><use href="#tools"/><use href="#mach"/></svg></button><button><svg><use href="#docb"/></svg></button><button><svg><use href="#tools"/><use href="#clk"/></svg></button>
    <i class="more"></i>
  </div>
  <div class="bar">
    <button><svg><use href="#funnel"/><use href="#target"/></svg></button><button class="dd"><svg><use href="#funnel2"/></svg></button><button class="dd"><svg><use href="#funnel3"/></svg></button><button class="dd"><svg><use href="#spind"/></svg></button>
    <i class="more"></i>
  </div>
  <div class="bar">
    <button class="dd"><svg><use href="#drill"/></svg></button><button class="dd"><svg><use href="#drill"/></svg></button><button class="dd"><svg><use href="#wry"/></svg></button><button class="dd"><svg><use href="#panel"/></svg></button><button class="dd"><svg><use href="#shapes"/></svg></button><button><svg><use href="#nox"/></svg></button>
    <i class="sep"></i>
    <button><svg><use href="#arrl"/></svg></button><button><svg><use href="#arrr"/></svg></button><button class="dd"><svg><use href="#cuber"/></svg></button><button><svg><use href="#boxb"/></svg></button><button><svg><use href="#frame"/></svg></button><button><svg><use href="#mill"/></svg></button><button class="dd"><svg><use href="#tooly"/></svg></button><button class="dd"><svg><use href="#quad"/></svg></button><button class="dd"><svg><use href="#pens"/></svg></button><button class="dd"><svg><use href="#press"/></svg></button>
    <i class="sep"></i>
    <button><svg><use href="#hatch"/></svg></button>
    <i class="sep"></i>
    <button><svg><use href="#wand"/></svg></button><button><svg><use href="#plug"/></svg></button><button><svg><use href="#notes"/></svg></button><button><svg><use href="#yg"/></svg></button><button><svg><use href="#ring"/></svg></button><button><svg><use href="#coil"/></svg></button><button><svg><use href="#panda"/></svg></button><button><svg><use href="#mon"/></svg></button>
    <i class="sep"></i>
    <button class="dd"><svg><use href="#logo"/></svg></button>
    <i class="more"></i>
  </div>
</div>

<div class="row selbar">
  <select class="combo" disabled aria-label="类型过滤器"><option></option></select>
  <select class="combo" disabled aria-label="选择范围"><option>整个装配</option></select>
  <button><svg viewBox="0 0 24 24"><path d="M2 7l7-3v15l-7 3zM10 4h3v16h-3z" fill="#8a8a8a"/><path d="M13 12h6" stroke="#8f8c70" stroke-width="3"/><circle cx="18" cy="8" r="4" fill="none" stroke="#8f8c70" stroke-width="2"/><circle cx="18" cy="16" r="4" fill="none" stroke="#8f8c70" stroke-width="2"/></svg></button>
  <i class="sep"></i>
  <button><svg viewBox="0 0 24 24"><path d="M3 2v5q3 4 7 0V3" fill="none" stroke="#7b8a90" stroke-width="3"/><path d="M10 12h13l-5 6v5h-3v-5z" fill="#a39c7c"/></svg></button>
  <button class="dd"><svg viewBox="0 0 24 24"><path d="M2 2h20v20H2z" fill="#ecd9d9" stroke="#c01818" stroke-width="2"/><path d="M9 4v10M4 9h10" stroke="#222" stroke-width="1.500"/><path d="M12 12h8l-3 4v4h-2v-4z" fill="#f2b23a"/></svg></button>
  <button><svg viewBox="0 0 24 24"><path d="M3 11q1-8 8-7t5 8" fill="none" stroke="#888" stroke-width="2"/><path d="M15 11v12M9 17h13" stroke="#777" stroke-width="1.500"/></svg></button>
  <button><svg viewBox="0 0 24 24"><path d="M1 4h9l11 6v4H10z" fill="#8d8d8d"/><path d="M17 12v11" stroke="#8d8d8d" stroke-width="4"/></svg></button>
  <i class="sep"></i>
  <button><svg viewBox="0 0 24 24"><path d="M7 3h10l5 9-5 9H7l-5-9z" fill="none" stroke="#777"/><circle cx="12" cy="12" r="2" fill="#777"/></svg></button>
  <button class="dd"><svg viewBox="0 0 24 24"><path d="M3 4h18v16H3z" fill="none" stroke="#777" stroke-width="2" stroke-dasharray="4 2"/></svg></button>
  <i class="sep"></i>
  <button><svg><use href="#gball"/></svg></button>
  <button><svg><use href="#cube"/></svg></button>
  <span class="fill"></span>
  <i class="more"></i>
</div>

<main class="work">
  <aside class="resbar">
    <button class="cog" aria-label="资源条选项"><svg><use href="#gear"/></svg></button>
    <button class="tab"><svg viewBox="0 0 24 24"><path d="M2 3l4-2 4 2v6l-4 2-4-2zM8 6l4-2 3 2v5l-4 2-3-2z" fill="#f5c528" stroke="#a57c0c"/><path d="M15 12h8M5 15v9M5 19h6" stroke="#222"/><path d="M13 18l4-2 5 1v5l-5 2-4-2z" fill="#f5b525" stroke="#a57c0c"/></svg></button>
    <button class="tab"><svg viewBox="0 0 24 24"><path d="M3 0l8 5-8 5zM21 0l-8 5 8 5z" fill="#2222b4"/><path d="M12 0v24" stroke="#333" stroke-dasharray="3 2"/><path d="M1 14h9v9H1z" fill="#ffee30" stroke="#555"/><path d="M14 13v11h10z" fill="#d21a1a" stroke="#700"/></svg></button>
    <button class="tab"><svg viewBox="0 0 24 24"><path d="M1 2q5-3 10 0v7q-5 3-10 0z" fill="#c04abf" stroke="#701870"/><path d="M13 9h10M5 13v11M5 19h6" stroke="#222"/><circle cx="17" cy="19" r="4" fill="#fff" stroke="#b03090" stroke-width="1.500"/><circle cx="17" cy="19" r="2" fill="#b03090"/></svg></button>
    <button class="tab on"><svg viewBox="0 0 24 24"><path d="M2 1h5v8H2z" fill="#3d8ae0"/><path d="M7 3h9M7 6h6M7 9h3" stroke="#3d8ae0" stroke-width="2"/><path d="M13 11h9M5 14v10M5 19h5" stroke="#222"/><path d="M13 15h4l2 5h4v4H13z" fill="#fff" stroke="#3060b0"/></svg></button>
    <button class="tab"><svg viewBox="0 0 24 24"><path d="M1 5l15-4v13L2 20zM1 10l15-4M1 15l15-4M6 4v14M11 3v13" fill="none" stroke="#7070c0"/><path d="M6 16l10-3 8 4v4l-9 3-9-4z" fill="#f08a28"/><path d="M6 18l9 4 9-3v3l-9 2-9-4z" fill="#3c7ad0"/></svg></button>
    <button class="tab"><svg viewBox="0 0 24 24"><path d="M1 9l6-3v14l-6 2zM9 8h8v13H9z" fill="#ccc" stroke="#444"/><path d="M15 2l4-2 4 2v5l-4 2-4-2z" fill="#f48a3a"/><path d="M17 23q0-6 6-7" fill="none" stroke="#555" stroke-width="3"/><path d="M6 5q3-4 8-3" stroke="#d22" fill="none"/></svg></button>
    <button class="tab"><svg viewBox="0 0 24 24"><path d="M0 7l6-5 4 0v17l-4 4H0z" fill="#f47c20"/><path d="M7 7l5-5h5v17l-5 4H7z" fill="#2fae3c"/><path d="M14 7l5-5h5v17l-4 4h-6z" fill="#2f80d4"/><path d="M1 7h5v14M8 7h4v14M15 7h4v14" stroke="#fff" stroke-opacity=".7" fill="none"/></svg></button>
    <button class="tab gap"><svg viewBox="0 0 24 24"><circle cx="8" cy="16" r="7" fill="#2a86d8"/><path d="M8 10v2M6 14h3v6M6 20h5" stroke="#fff" stroke-width="2" fill="none"/><path d="M9 5q10 0 11 12M10 1q13 1 14 13" fill="none" stroke="#4a78b8" stroke-width="2.500"/></svg></button>
    <button class="tab gap"><svg viewBox="0 0 24 24"><path d="M3 1h13l5 5v17H3z" fill="#fff" stroke="#3a6cc0" stroke-width="1.500"/><circle cx="12" cy="14" r="6" fill="#2f9e58"/><path d="M9 11q5 0 2 7" stroke="#8fd0ff" stroke-width="3" fill="none"/></svg></button>
    <button class="tab gap"><svg viewBox="0 0 24 24"><circle cx="12" cy="12" r="10" fill="#f2f7ff" stroke="#68788e" stroke-width="2"/><path d="M12 5v8h6" stroke="#222" stroke-width="1.500" fill="none"/></svg></button>
    <button class="tab"><svg viewBox="0 0 24 24"><path d="M2 1h9v22H2z" fill="url(#rainbow)"/><path d="M11 9l9 13" stroke="#111" stroke-width="3"/></svg></button>
    <button class="tab"><svg viewBox="0 0 24 24"><path d="M2 1h8v17H2z" fill="#3f88c8"/><path d="M10 4h13l-9 8M2 20h15" stroke="#4a70c0" stroke-width="2" fill="none"/><path d="M11 8l9 13" stroke="#111" stroke-width="3"/></svg></button>
    <button class="tab"><svg viewBox="0 0 24 24"><path d="M7 6q5-6 13-4l-1 3q-4-1-5 2l-5 8" stroke="#555" stroke-width="1.500" fill="none"/><path d="M3 12l6 4 8-1-1 5-8 3-6-3z" fill="#ccc" stroke="#444"/><path d="M5 19h6v4H5z" fill="#e8962c"/></svg></button>
    <button class="tab"><svg viewBox="0 0 24 24"><path d="M2 4l5-2v19l-5 2z" fill="#ddd" stroke="#333"/><path d="M8 2h15v18H8z" fill="#fff" stroke="#333"/><path d="M11 5h10v10H11z" fill="#d22"/><path d="M12 5h7v3l2 7h-3l-2-4-3 4h-2z" fill="#6f93e8"/></svg></button>
    <button class="tab"><svg viewBox="0 0 24 24"><path d="M1 2h22v20H1z" fill="#e6f0fa" stroke="#9ab"/><path d="M5 4h14v12H5zM8 9h8v5H8zM5 6h14" fill="#fff" stroke="#333"/></svg></button>
    <button class="tab"><svg viewBox="0 0 24 24"><path d="M2 12q2-9 10-11l7 3v6l-6 10-8-1z" fill="#7f9be6"/><path d="M12 9q5-3 10 0v12q-5 3-10 0z" fill="#f8c848" stroke="#b8881c"/></svg></button>
    <span class="arrows"><button aria-label="顶部"></button><button aria-label="向上"></button><button aria-label="向下"></button><button aria-label="底部"></button></span>
  </aside>

  <section class="navi">
    <h2>工序导航器 - 程序顺序<i class="max"></i></h2>
    <div class="grid">
      <div class="scroll">
      <table>
        <colgroup><col class="c1"><col class="c2"><col class="c3"><col class="c4"><col></colgroup>
        <thead><tr><th>名称</th><th>换刀</th><th>刀轨</th><th>刀具</th><th>刀</th></tr></thead>
        <tbody>
          <tr><td><div class="n root">NC_PROGRAM</div></td><td></td><td></td><td></td><td></td></tr>
          <tr><td class="g0"><div class="n l1"><svg><use href="#fld"/></svg>未用项</div></td><td></td><td></td><td></td><td></td></tr>
          <tr><td class="g0"><div class="n l1"><svg><use href="#bang"/></svg><svg><use href="#fld"/></svg>PROGRAM</div></td><td></td><td></td><td></td><td></td></tr>
          <tr><td class="g0"><div class="n l0"><b class="ex"></b><svg><use href="#bang"/></svg><svg><use href="#fld"/></svg>A</div></td><td></td><td></td><td></td><td></td></tr>
          <tr><td class="g1"><div class="n l2"><b class="ex"></b><svg><use href="#bang"/></svg><svg><use href="#fld"/></svg>ZJ2_A1</div></td><td></td><td></td><td></td><td></td></tr>
          <tr class="v"><td class="g1 g2"><div class="n l3"><svg><use href="#ok"/></svg><svg><use href="#cav"/></svg><span>CAVITY_MILL</span></div></td><td><svg><use href="#em"/></svg></td><td><svg><use href="#ok"/></svg></td><td>17R0</td><td></td></tr>
          <tr><td class="g1"><div class="n l2"><b class="ex"></b><svg><use href="#bang"/></svg><svg><use href="#fld"/></svg>ZJ2_A2</div></td><td></td><td></td><td></td><td></td></tr>
          <tr class="v"><td class="g1 g2"><div class="n l3"><svg><use href="#ok"/></svg><svg><use href="#cav"/></svg><span>CAVITY_MILL_...</span></div></td><td><svg><use href="#em"/></svg></td><td><svg><use href="#ok"/></svg></td><td>8R0</td><td></td></tr>
          <tr><td class="g1"><div class="n l2"><b class="ex"></b><svg><use href="#bang"/></svg><svg><use href="#fld"/></svg>ZJ2_A3</div></td><td></td><td></td><td></td><td></td></tr>
          <tr><td class="g1 g2"><div class="n l3"><svg><use href="#ok"/></svg><svg><use href="#flr"/></svg><span>FLOOR_WALL</span></div></td><td></td><td><svg><use href="#ok"/></svg></td><td>8R0</td><td></td></tr>
          <tr><td class="g1 g2"><div class="n l3"><svg><use href="#ok"/></svg><svg><use href="#zlv"/></svg><span>ZLEVEL_PROFI...</span></div></td><td></td><td><svg><use href="#ok"/></svg></td><td>8R0</td><td></td></tr>
          <tr><td class="g1 g2"><div class="n l3"><svg><use href="#ok"/></svg><svg><use href="#ctr"/></svg><span>CONTOUR_AR...</span></div></td><td></td><td><svg><use href="#ok"/></svg></td><td>8R0</td><td></td></tr>
          <tr><td class="g1"><div class="n l2"><b class="ex"></b><svg><use href="#bang"/></svg><svg><use href="#fld"/></svg>ZJ2_A4</div></td><td></td><td></td><td></td><td></td></tr>
          <tr class="v"><td class="g1 g2"><div class="n l3"><svg><use href="#ok"/></svg><svg><use href="#ctr"/></svg><span>CONTOUR_AR...</span></div></td><td><svg><use href="#em"/></svg></td><td><svg><use href="#ok"/></svg></td><td>BALL_</td><td></td></tr>
          <tr><td class="g1"><div class="n l2"><b class="ex"></b><svg><use href="#bang"/></svg><svg><use href="#fld"/></svg>ZJ2_B1</div></td><td></td><td></td><td></td><td></td></tr>
          <tr class="v"><td class="g1 g2"><div class="n l3"><svg><use href="#ok"/></svg><svg><use href="#spt"/></svg><span>SPOT_DRILLIN...</span></div></td><td><svg><use href="#dr"/></svg></td><td><svg><use href="#ok"/></svg></td><td>CD8</td><td>0</td></tr>
          <tr><td class="g1"><div class="n l2"><b class="ex"></b><svg><use href="#bang"/></svg><svg><use href="#fld"/></svg>ZJ2_B2</div></td><td></td><td></td><td></td><td></td></tr>
          <tr class="s"><td class="g2"><div class="n l3"><svg><use href="#ok"/></svg><svg><use href="#spt"/></svg><span>PECK_DRILLIN...</span></div></td><td><svg><use href="#dr"/></svg></td><td><svg><use href="#ok"/></svg></td><td>D8.5</td><td>0</td></tr>
          <tr><td></td><td></td><td></td><td></td><td></td></tr>
          <tr><td></td><td></td><td></td><td></td><td></td></tr>
          <tr><td></td><td></td><td></td><td></td><td></td></tr>
          <tr><td></td><td></td><td></td><td></td><td></td></tr>
          <tr><td></td><td></td><td></td><td></td><td></td></tr>
          <tr><td></td><td></td><td></td><td></td><td></td></tr>
          <tr><td></td><td></td><td></td><td></td><td></td></tr>
          <tr><td></td><td></td><td></td><td></td><td></td></tr>
          <tr><td></td><td></td><td></td><td></td><td></td></tr>
          <tr><td></td><td></td><td></td><td></td><td></td></tr>
          <tr><td></td><td></td><td></td><td></td><td></td></tr>
          <tr><td></td><td></td><td></td><td></td><td></td></tr>
          <tr><td></td><td></td><td></td><td></td><td></td></tr>
          <tr><td></td><td></td><td></td><td></td><td></td></tr>
          <tr><td></td><td></td><td></td><td></td><td></td></tr>
          <tr><td></td><td></td><td></td><td></td><td></td></tr>
          <tr><td></td><td></td><td></td><td></td><td></td></tr>
        </tbody>
      </table>
      </div>
      <div class="hscroll"><i class="left"></i><b></b><i class="right"></i></div>
    </div>
    <div class="split"><i></i></div>
    <button class="fold">相关性<svg viewBox="0 0 12 12"><path d="M1 1h3l2 5 2-5h3L7 11H5z" fill="#444"/></svg></button>
    <button class="fold">细节<svg viewBox="0 0 12 12"><path d="M1 1h3l2 5 2-5h3L7 11H5z" fill="#444"/></svg></button>
  </section>

  <div class="strips">
    <div class="strip">
      <button><svg><use href="#blk"/><use href="#treer"/></svg></button><button><svg><use href="#pede"/></svg></button><button><svg><use href="#new"/></svg></button><i class="sep"></i><button><svg><use href="#copy"/></svg></button><button><svg><use href="#tool"/></svg></button><i class="sep"></i><button><svg><use href="#cage"/></svg></button><button><svg><use href="#gblk"/></svg></button><i class="sep"></i><button><svg><use href="#rep"/></svg></button><button><svg><use href="#full"/></svg></button><i class="sep"></i><button><svg><use href="#box"/></svg></button>
      <button><svg><use href="#holder"/><use href="#chkb"/></svg></button><button><svg><use href="#box"/><use href="#holder"/></svg></button><button><svg><use href="#tree"/><use href="#box"/><use href="#holder"/></svg></button><button><svg><use href="#sheet"/></svg></button>
      <i class="sep"></i>
      <button><svg><use href="#flag"/></svg></button>
      <i class="sep"></i>
      <button><svg><use href="#cards"/></svg></button><button><svg><use href="#rep"/></svg></button>
      <i class="sep"></i>
      <button><svg><use href="#tool"/><use href="#box"/><use href="#lines"/></svg></button><button><svg><use href="#tool"/><use href="#wr"/></svg></button><button><svg><use href="#tool"/><use href="#clk"/></svg></button><button><svg><use href="#mach"/><use href="#chk"/><use href="#dcs"/></svg></button>
      <i class="more"></i>
    </div>
    <div class="strip">
      <button><svg><use href="#mspin"/></svg></button><button><svg><use href="#ball"/></svg></button><button><svg><use href="#cube"/></svg></button><button><svg><use href="#pen"/></svg></button><button><svg><use href="#pgs"/></svg></button><button><svg><use href="#swap"/></svg></button><button><svg><use href="#bits"/></svg></button><button><svg><use href="#gblk"/></svg></button><button><svg><use href="#rep"/></svg></button><button><svg><use href="#full"/></svg></button><button><svg><use href="#pgs"/></svg></button>
      <button><svg><use href="#pic"/></svg></button><button><svg><use href="#ball"/></svg></button><button><svg><use href="#abox"/></svg></button><button><svg><use href="#pen"/></svg></button><button><svg><use href="#full"/><use href="#rarr"/></svg></button><button><svg><use href="#pgs"/></svg></button><button><svg><use href="#slope"/></svg></button><button><svg><use href="#full"/><use href="#star"/></svg></button><button><svg><use href="#print"/></svg></button><button><svg><use href="#swap"/></svg></button><button><svg><use href="#bits"/><use href="#wr"/></svg></button><button><svg><use href="#gtab"/></svg></button><button><svg><use href="#dk"/><use href="#pcl"/></svg></button>
      <i class="more"></i>
    </div>
    <div class="strip long">
      <button><svg><use href="#mdown"/></svg></button><button><svg><use href="#gun"/></svg></button><button><svg><use href="#holder"/></svg></button><button><svg><use href="#holder"/></svg></button><button><svg><use href="#holder"/></svg></button><button><svg><use href="#holder"/></svg></button><button><svg><use href="#holder"/></svg></button><button><svg><use href="#holder"/></svg></button><button><svg><use href="#holder"/></svg></button><button><svg><use href="#holder"/></svg></button><button><svg><use href="#holder"/></svg></button>
      <button><svg><use href="#holder"/><use href="#treer"/></svg></button><button><svg><use href="#holder"/><use href="#blkr"/></svg></button><button><svg><use href="#holder"/><use href="#wheel"/></svg></button><button><svg><use href="#gunr"/></svg></button><button><svg><use href="#holder"/><use href="#blkr"/><use href="#wr"/></svg></button><button><svg><use href="#holder"/><use href="#wr"/></svg></button><button><svg><use href="#blkr"/><use href="#circ"/><use href="#xr"/></svg></button><button><svg><use href="#box"/><use href="#holder"/></svg></button><button><svg><use href="#full"/><use href="#star"/></svg></button><button><svg><use href="#sheet"/></svg></button><button><svg><use href="#gun"/><use href="#dcs"/></svg></button><button><svg><use href="#holder"/><use href="#wr"/></svg></button><button><svg><use href="#holder"/><use href="#rota"/></svg></button><button><svg><use href="#twin"/></svg></button><button class="ming">名</button>
      <i class="more"></i>
    </div>
  </div>

  <section class="view">
    <svg class="scene" viewBox="523 157 1397 827" preserveAspectRatio="xMinYMin slice">
      <rect x="523" y="157" width="1397" height="827" fill="url(#sky)"/>
      <g stroke="#3a0a50" stroke-width="1">
        <path d="M1093 731l31-2 7 211-33-53z" fill="#a800ae"/>
        <path d="M1338 672l9-1 32 33 2 76-40-42z" fill="#a800ae"/>
        <path d="M1347 671q24 4 32 33-13-8-32-33z" fill="#a58020"/>
        <path d="M721 456l31 52 13 462-33-54z" fill="#a800ae"/>
        <path d="M752 508l687-53 9 319-67 6-2-76q-6-34-38-33l-74 6q-38 4-40 41l5 215-101 8-7-211-296 23 5 213-68 4z" fill="#da00da"/>
        <path d="M721 456l686-56 32 55-687 53z" fill="#0050ff"/>
        <ellipse cx="917" cy="468" rx="31" ry="10" fill="url(#hole)"/>
        <ellipse cx="1243" cy="441" rx="31" ry="10" fill="url(#hole)"/>
      </g>
      <path d="M916 436l-3-109 325-25 3 107" fill="none" stroke="#c2487c" stroke-width="2" stroke-dasharray="6 3 2 3"/>
      <path d="M916 436v23M1241 409l1 23" stroke="#20c8f0" stroke-width="2"/>
      <path d="M916 459l1 17M1242 432v19" stroke="#f0d8f4" stroke-width="2"/>
      <g class="axis">
        <path d="M1079 454l-2-90" stroke="#0838d0" stroke-width="3"/><path d="M1077 354l4 22h-8z" fill="#0838d0"/>
        <path d="M1080 454l50-4 52-3" stroke="#e8432e" stroke-width="2"/><path d="M1130 450l-16-1 0 5zM1183 447l-21-3 1 7z" fill="#e8432e"/>
        <path d="M1079 454l-17-28" stroke="#0a9a3a" stroke-width="2"/><path d="M1077 451l-9-14 6 2zM1060 424l8 2-3 10z" fill="#0aa838"/>
        <text x="1082" y="354" fill="#0a48d8">ZM</text><text x="1083" y="400" fill="#0a48d8">ZC</text>
        <text x="1062" y="422" fill="#12a848">YM</text><text x="1070" y="437" fill="#12a8a0">YC</text>
        <text x="1119" y="446" fill="#e04a6a">XC</text><text x="1164" y="442" fill="#d8507a">XM</text>
      </g>
      <path d="M557 911l26-3 6 8-1 27-25 1-6-9z" fill="#a6a6a6"/><path d="M557 934l26-1 5 9M583 908v25" stroke="#c8c8c8" fill="none"/>
      <g class="axis">
        <path d="M588 916l-40 3" stroke="#e02828" stroke-width="3"/><path d="M542 919l13-4v7z" fill="#e02828"/>
        <path d="M588 918v36" stroke="#0838e8" stroke-width="3"/><path d="M588 962l-4-14h8z" fill="#0838e8"/>
        <path d="M587 913l-7-13" stroke="#10a030" stroke-width="3"/><circle cx="588" cy="916" r="4" fill="#f4f4f4"/>
        <text x="533" y="926" fill="#d83030">X</text><text x="575" y="907" fill="#10a030">Y</text><text x="584" y="969" fill="#0838e8">Z</text>
      </g>
    </svg>
    <p class="viewname">正三轴测图 工作 摄像机 正三轴测图</p>
  </section>

  <form class="dialog">
    <header><button type="button" class="dcog" aria-label="对话框选项"><svg><use href="#gear"/></svg></button><span>Cycle 参数</span><button type="button" class="dx" aria-label="关闭"><svg viewBox="0 0 16 16"><path d="M3 3l10 10M13 3L3 13" stroke="#fff" stroke-width="3"/></svg></button></header>
    <div class="opts">
      <button type="button">Depth -模型深度</button>
      <button type="button">进给率 (MMPM) - 60.0000</button>
      <button type="button">Dwell - 关</button>
      <button type="button">Option - 关</button>
      <button type="button">CAM - 无</button>
      <button type="button">Rtrcto - 20.0000</button>
      <button type="button">Step 值 - 已定义</button>
    </div>
    <footer><button type="button" class="okb">确定</button><button type="button">返回</button><button type="button">取消</button></footer>
  </form>

  <svg class="callout-lines" viewBox="550 240 690 180">
    <path d="M867 293L578 392M1056 272l148 22" stroke="#d0147f" stroke-width="3"/>
    <path d="M559 400l22-15 5 14zM1225 297l-25 2 2-13z" fill="#fa1088"/>
  </svg>
  <div class="callout">明明设的20mm</div>
</main>

<div class="row bottom">
  <div class="bar">
    <button><svg><use href="#axes"/></svg></button><button><svg><use href="#pc"/></svg></button><button><svg><use href="#box"/><use href="#wr"/></svg></button><button><svg><use href="#gblk"/></svg></button><button><svg><use href="#arr"/></svg></button><button><svg><use href="#spin"/></svg></button><button><svg><use href="#cpb"/></svg></button><button><svg><use href="#pede"/></svg></button><button><svg><use href="#house"/></svg></button><button><svg><use href="#cage"/></svg></button><button><svg><use href="#anchor"/></svg></button><button><svg><use href="#plates"/></svg></button><button><svg><use href="#scan"/></svg></button><button><svg><use href="#ingot"/></svg></button><button><svg><use href="#blkr"/><use href="#pede"/></svg></button><button><svg><use href="#gblk"/></svg></button><button><svg><use href="#rblk"/></svg></button><button><svg><use href="#gcut"/></svg></button><button><svg><use href="#gblk"/></svg></button><button><svg><use href="#updn"/></svg></button><button class="dd"><svg><use href="#sel"/></svg></button><button class="dd"><svg><use href="#hex"/></svg></button><button><svg><use href="#vase"/></svg></button><button><svg><use href="#ublk"/></svg></button><button><svg><use href="#axes"/></svg></button><button><svg><use href="#rsq"/></svg></button><button><svg><use href="#osq"/></svg></button><button><svg><use href="#junk"/></svg></button><button><svg><use href="#wire"/></svg></button><button><svg><use href="#cone"/></svg></button><button><svg><use href="#conv"/></svg></button><button><svg><use href="#ell"/></svg></button>
    <i class="more"></i>
  </div>
  <div class="bar last">
    <button><svg><use href="#dk"/><use href="#pa"/></svg></button><button><svg><use href="#dk"/><use href="#pb"/></svg></button><button><svg><use href="#dk"/><use href="#pc"/></svg></button><button><svg><use href="#dk"/><use href="#pd"/></svg></button><button><svg><use href="#dk"/><use href="#pe"/></svg></button><button><svg><use href="#dk"/><use href="#pf"/></svg></button><button><svg><use href="#dk"/><use href="#ph"/></svg></button><button><svg><use href="#dk"/><use href="#pt"/></svg></button><button><svg><use href="#dk"/><use href="#pn"/></svg></button><button><svg><use href="#dk"/><use href="#pd"/></svg></button><button><svg><use href="#dk"/><use href="#pp"/></svg></button><button><svg><use href="#dk"/><use href="#pe"/></svg></button><button><svg><use href="#dk"/><use href="#star"/></svg></button><button><svg><use href="#dk"/><use href="#pm"/></svg></button><button><svg><use href="#dk"/><use href="#pk"/></svg></button><button><svg><use href="#dk"/><use href="#pl"/></svg></button><button><svg><use href="#dk"/><use href="#pl"/></svg></button><button><svg><use href="#dk"/><use href="#pa"/><use href="#pp"/></svg></button><button><svg><use href="#dk"/><use href="#pe"/></svg></button><button><svg><use href="#dk"/><use href="#pcl"/></svg></button><button><svg><use href="#dk"/><use href="#ptr"/></svg></button><button><svg><use href="#dk"/><use href="#hour"/></svg></button>
    <i class="more"></i>
  </div>
</div>

<footer class="status">
  <b class="msg">参数组 1</b><span class="fill"></span><span class="cell w1"></span><span class="cell w2"><svg viewBox="0 0 18 18"><path d="M1 5V1h4M13 1h4v4M17 13v4h-4M5 17H1v-4" fill="none" stroke="#555"/><path d="M4 3h10v12H4z" fill="#fff" stroke="#234"/><path d="M6 7h6v6H6z" fill="#3a7ad0"/></svg></span><span class="cell w3"></span>
</footer>

<!-- site stamp -->
<svg class="stamp" viewBox="0 0 118 122">
  <path d="M111 43A57 59 0 1 0 115 78L108 80A49 51 0 1 1 103 37l3-1 1 10z" fill="#f00a0a"/>
  <ellipse cx="60" cy="62" rx="55" ry="57" fill="none" stroke="#f00a0a" stroke-width="5" stroke-dasharray="0 25 4 9 11 3 6 5 3 7 14 4 60 6 9 4 90 9" stroke-linecap="round"/>
  <path d="M104 33l5 20M114 76l1 5" stroke="#f00a0a" stroke-width="3" stroke-dasharray="6 2"/>
  <circle cx="58" cy="26" r="5" fill="#f00a0a"/>
  <path d="M43 31q18 5 39-3l4 6-19 9q7 13 8 30h-9q-3-14-9-21-4 8-12 14l-5-4q7-9 10-19-5-3-7-12z" fill="#f00a0a"/>
  <text x="21" y="81" class="s1">UG爱好者</text>
  <rect x="14" y="83" width="95" height="13" rx="2" fill="#f00a0a"/>
  <text x="17" y="93" class="s2">WWW.UGSNX.COM</text>
</svg>

</body>
</html>
```
FILE: styles.css
```css
* {
  box-sizing: border-box;
}
body {
  margin: 0;
  height: 100vh;
  display: flex;
  flex-direction: column;
  overflow: hidden;
  background-color: #d6d6d6;
  color: #111;
  font-family: "Noto Sans", "Noto Sans CJK SC", sans-serif;
  font-size: 12px;
  line-height: 16px;
  position: relative;
}
button {
  font: inherit;
  color: inherit;
  margin: 0;
  padding: 0;
  border: none;
  background: none;
}
svg {
  display: block;
  width: 24px;
  height: 24px;
  flex: none;
}
.defs {
  position: absolute;
  width: 0;
  height: 0;
}
.i18 {
  width: 18px;
  height: 18px;
}
.fill {
  flex: 1;
}

/* title */
.titlebar {
  height: 27px;
  flex: none;
  display: flex;
  align-items: center;
  gap: 4px;
  padding: 0 3px 1px 2px;
  background-color: #1b1b1b;
  border-top: 3px solid #565656;
  border-bottom: 1px solid #000;
  color: #f2f2f2;
}
.caption {
  flex: 1;
  font-size: 13px;
}
.brand {
  font-family: "Open Sans", sans-serif;
  font-size: 14px;
  font-weight: 800;
  color: #fff;
  margin-right: 20px;
}
.win {
  width: 18px;
  height: 19px;
  border: 1px solid #8a8a8a;
  border-radius: 2px;
  background: linear-gradient(#777, #2c2c2c);
}
.win.close {
  background: linear-gradient(#f08a70, #cc2a10);
  border-color: #e9a08e;
}
.win svg, .mdi svg {
  width: 100%;
  height: 100%;
}

/* menu */
.menubar {
  height: 28px;
  flex: none;
  display: flex;
  align-items: center;
  padding: 0 5px 2px 4px;
  background: linear-gradient(#ebebeb, #dedede);
}
.menubar a {
  color: #111;
  text-decoration: none;
  margin-right: 14px;
}
.menubar a.wide {
  margin-right: 22px;
}
.menuicon {
  margin: 0 2px 0 3px;
}
.mdi {
  width: 17px;
  height: 17px;
  margin-left: 2px;
  border: 1px solid #777;
  border-radius: 4px;
  background: #f4f4f4;
}
.mdi.off {
  border-color: #ccc;
}
.grip {
  width: 2px;
  height: 20px;
  background: repeating-linear-gradient(#999 0 2px, transparent 2px 4px);
}

/* tool rows */
.row {
  height: 34px;
  flex: none;
  display: flex;
  background: linear-gradient(#e2e2e2, #cfcfcf);
  border-top: 1px solid #bbb;
}
.row + .row {
  height: 35px;
}
.bar {
  display: flex;
  align-items: center;
  padding: 0 0 2px 7px;
  position: relative;
  border-top: 1px solid #f6f6f6;
  border-right: 1px solid #b8b8b8;
}
.bar::before {
  content: "";
  position: absolute;
  left: 4px;
  top: 5px;
  bottom: 5px;
  width: 2px;
  background: repeating-linear-gradient(#999 0 2px, transparent 2px 4px);
}
.bar button {
  width: 31px;
  height: 30px;
  display: flex;
  align-items: center;
  justify-content: center;
}
.bar button.dd {
  width: 43px;
  justify-content: flex-start;
  padding-left: 4px;
}
.dd::after, .car, .more::after {
  content: "";
  border: 3px solid transparent;
  border-top: 4px solid #000;
  border-bottom: none;
}
.dd::after {
  margin-left: 7px;
}
.bar .start {
  width: 67px;
  gap: 4px;
}
.more {
  width: 14px;
  align-self: flex-end;
  padding: 0 0 6px 4px;
}
.more::after {
  display: block;
  width: 0;
}
.sep {
  width: 6px;
  align-self: stretch;
  background: linear-gradient(90deg, transparent 2px, #b4b4b4 2px 3px, #fafafa 3px 4px, transparent 4px);
}
.find {
  display: flex;
  align-items: center;
  width: 144px;
  height: 25px;
  background-color: #fff;
  border: 1px solid #a5a5a5;
}
.find input {
  width: 110px;
  border: none;
  outline: none;
  background: none;
  font: inherit;
  padding: 0 3px;
  flex: 1;
}
.find input::placeholder {
  color: #888;
}
.find svg {
  width: 16px;
  height: 16px;
  margin-right: 4px;
}

/* selection bar */
.row.selbar {
  height: 33px;
  align-items: center;
  padding: 0 1px 3px 5px;
  background: linear-gradient(#c6c6c6, #dcdcdc);
  border-top-color: #999;
  border-bottom: 1px solid #a8b8b8;
}
.combo {
  width: 147px;
  height: 23px;
  margin-right: 8px;
  padding: 0 3px;
  border: 1px solid #989898;
  border-radius: 3px;
  color: #999;
  opacity: 1;
  font: inherit;
  appearance: none;
  background: conic-gradient(from -35deg at 50% 100%, #999 70deg, transparent 0) right 4px center / 8px 6px no-repeat, linear-gradient(90deg, #aaa 1px, #ececec 1px) right / 17px 100% no-repeat, #d2d2d2;
}
.combo + .combo {
  width: 155px;
  margin-right: 6px;
}
.selbar button {
  width: 22px;
  display: flex;
  align-items: center;
}
.selbar button svg {
  width: 18px;
  height: 18px;
}
.selbar .dd {
  width: 36px;
}
.selbar .dd::after {
  margin-left: 5px;
}

/* work area */
.work {
  flex: 1;
  min-height: 0;
  display: flex;
  position: relative;
}
.resbar {
  width: 31px;
  background: linear-gradient(90deg, #b6b6b6, #9b9b9b);
  display: flex;
  flex-direction: column;
  gap: 3px;
  padding-left: 4px;
  overflow: hidden;
}
.cog {
  height: 28px;
  margin-bottom: 14px;
  padding: 0 3px;
  flex: none;
}
.cog svg {
  width: 16px;
  height: 16px;
}
.tab {
  width: 27px;
  height: 39px;
  flex: none;
  border: 2px solid #7c7c7c;
  border-right: none;
  border-radius: 4px 0 0 4px;
  background: linear-gradient(#dcdcdc, #cfcfcf);
}
.tab.on {
  background: #eaeaea;
}
.tab.gap {
  margin-top: 12px;
}
.arrows {
  display: flex;
  flex-direction: column;
  gap: 3px;
  padding: 8px 4px;
}
.arrows button {
  height: 14px;
  width: 16px;
  flex: none;
  background: conic-gradient(from 145deg at 50% 0, #aaa 70deg, transparent 0) center / 8px 5px no-repeat #e4e4e4;
}

/* navigator */
.navi {
  width: 388px;
  padding: 0 8px 0 7px;
  display: flex;
  flex-direction: column;
  background-color: #ebebeb;
  border-top: 1px solid #777;
  border-right: 1px solid #999;
}
.navi h2 {
  margin: 0;
  height: 27px;
  padding: 0 5px;
  display: flex;
  align-items: center;
  justify-content: space-between;
  font-size: 12px;
  font-weight: 700;
}
.max {
  width: 13px;
  height: 12px;
  border: 1px solid #000;
  border-top-width: 2px;
}
.grid {
  flex: 1;
  min-height: 0;
  display: flex;
  flex-direction: column;
  border: 1px solid #6f6f6f;
}
.scroll {
  flex: 1;
  overflow: hidden;
  background-color: #fff;
}
table {
  width: 100%;
  table-layout: fixed;
  border-collapse: separate;
  border-spacing: 0;
}
.c1 { width: 189px; }
.c2 { width: 37px; }
.c3 { width: 36px; }
.c4 { width: 90px; }
th {
  height: 22px;
  padding: 0 0 0 6px;
  text-align: left;
  font-weight: 400;
  white-space: nowrap;
  background: linear-gradient(#fafafa, #dcdcdc);
  border-right: 1px solid #aaa;
  border-bottom: 1px solid #999;
}
th:last-child {
  padding-left: 4px;
  border-right: none;
}
td {
  height: 20px;
  padding: 0 0 0 4px;
  position: relative;
  border-right: 1px solid #dedede;
  border-bottom: 1px solid #dedede;
  color: #3a3a3a;
}
td:first-child {
  padding: 0;
  border-right: 1px solid #000;
}
tbody tr:nth-child(even) td {
  background-color: #f6f6f6;
}
td svg {
  width: 16px;
  height: 16px;
}
.v td {
  color: #6a3cc0;
}
.n {
  display: flex;
  align-items: center;
  height: 19px;
  white-space: nowrap;
}
.root { padding-left: 4px; }
.l0 { padding-left: 5px; }
.l1 { padding-left: 21px; }
.l2 { padding-left: 24px; }
.l3 { padding-left: 58px; }
.l0 svg:last-of-type, .l1 svg:last-of-type, .l2 svg:last-of-type {
  margin-right: 2px;
}
.l3 span {
  flex: 1;
  padding-left: 2px;
  margin-left: 1px;
  line-height: 19px;
}
.ex {
  width: 9px;
  height: 9px;
  margin-right: 7px;
  border: 1px solid #8a8a8a;
  border-radius: 2px;
  background: linear-gradient(#555, #555) center / 5px 1px no-repeat #fff;
  position: relative;
  z-index: 1;
}
.g0::before, .g1::before {
  content: "";
  position: absolute;
  left: 9px;
  top: 0;
  bottom: -1px;
  width: 10px;
  border-left: 1px dotted #999;
  background: repeating-linear-gradient(90deg, #999 0 1px, transparent 1px 3px) 0 9px / 100% 1px no-repeat;
}
.g1::before {
  left: 28px;
  width: 1px;
  background: none;
}
.g2::after {
  content: "";
  position: absolute;
  left: 47px;
  top: -9px;
  width: 9px;
  height: 19px;
  border-left: 1px dotted #999;
  border-bottom: 1px dotted #999;
}
tbody .s td:not(:first-child), .s .l3 span {
  background-color: #3296f8;
  color: #fff;
}
.hscroll {
  height: 18px;
  display: flex;
  align-items: center;
  background-color: #f0f0f0;
  padding: 0 6px;
}
.hscroll b {
  width: 172px;
  height: 15px;
  margin: 0 auto 0 9px;
  border: 1px solid #999;
  background: repeating-linear-gradient(90deg, #555 0 1px, transparent 1px 3px) center / 8px 6px no-repeat, linear-gradient(#f5f5f5, #cfcfcf);
}
.hscroll i {
  border: 4px solid transparent;
}
.hscroll .left {
  border-left: none;
  border-right-color: #333;
}
.hscroll .right {
  border-right: none;
  border-left-color: #333;
}
.split {
  height: 12px;
  display: flex;
  align-items: center;
  justify-content: center;
}
.split::before, .split::after {
  content: "";
  flex: 1;
  border-top: 1px solid #b8b8b8;
}
.split i {
  width: 68px;
  height: 6px;
  margin: 0 5px;
  border: 1px solid #aaa;
  background-color: #ddd;
}
.fold {
  height: 23px;
  display: flex;
  align-items: center;
  justify-content: space-between;
  padding: 0 0 0 6px;
  border: 1px solid #aaa;
  border-top-color: #fff;
  background: linear-gradient(#f6f6f6 50%, #dcdcdc 50%);
}
.fold:last-child {
  margin-bottom: 6px;
}
.fold svg {
  width: 22px;
  height: 21px;
  padding: 5px;
  border-left: 1px solid #aaa;
}

/* vertical strips */
.strips {
  width: 104px;
  padding-left: 1px;
  display: flex;
  align-items: flex-start;
  overflow: hidden;
  background-color: #cdcdcd;
}
.strip {
  width: 34px;
  display: flex;
  flex-direction: column;
  align-items: center;
  padding-top: 6px;
  background: #d9d9d9;
  border-right: 1px solid #bbb;
  border-bottom: 1px solid #bbb;
  box-shadow: inset 1px 0 #f4f4f4;
  position: relative;
}
.strip.long {
  align-self: stretch;
}
.strip::before {
  content: "";
  position: absolute;
  top: 4px;
  left: 6px;
  right: 6px;
  height: 2px;
  background: repeating-linear-gradient(90deg, #aaa 0 2px, transparent 2px 4px);
}
.strip button {
  height: 31px;
  width: 24px;
  flex: none;
  display: flex;
  align-items: center;
  opacity: .850;
}
.strip .sep {
  height: 6px;
  width: auto;
  background: linear-gradient(transparent 2px, #bbb 2px 3px, #fafafa 3px 4px, transparent 4px);
}
.strip .more {
  align-self: flex-start;
  height: 14px;
  padding: 2px 0 0 9px;
}
.strip .more::after {
  border: 4px solid transparent;
  border-left: none;
  border-right-color: #000;
}
.strip .ming {
  font-size: 19px;
  font-weight: 700;
  color: #6c6c9c;
  justify-content: center;
}

/* graphics window */
.view {
  flex: 1;
  position: relative;
  min-width: 0;
  border: 1px solid #c8824a;
  background-color: #0f0f0f;
  overflow: hidden;
}
.scene {
  width: 100%;
  height: 100%;
}
.axis {
  font-family: "Liberation Sans", sans-serif;
  font-size: 13px;
}
.viewname {
  position: absolute;
  left: 4px;
  bottom: 2px;
  margin: 0;
  font-size: 13px;
  color: #e3953f;
}

/* cycle dialog */
.dialog {
  position: absolute;
  left: 334px;
  top: 47px;
  width: 328px;
  border: 1px solid #444;
  border-bottom: 9px solid #1a1a1a;
  border-radius: 6px;
  background-color: #ececec;
  font-size: 12px;
}
.dialog header {
  height: 21px;
  display: flex;
  align-items: center;
  background: linear-gradient(#555, #1c1c1c 50%, #181818);
  border-radius: 4px 4px 0 0;
  color: #fff;
  font-weight: 700;
}
.dialog header span {
  flex: 1;
  padding-left: 9px;
}
.dialog header button {
  height: 21px;
  width: 20px;
  padding: 3px 2px;
  border-right: 1px solid #aaa;
}
.dialog header .dx {
  border-right: none;
  border-left: 1px solid #aaa;
}
.dialog header svg {
  width: 15px;
  height: 15px;
}
.opts {
  display: flex;
  flex-direction: column;
  gap: 4px;
  padding: 9px 10px 10px;
}
.opts button, .dialog footer button {
  height: 27px;
  border: 1px solid #777;
  border-radius: 4px;
  box-shadow: inset 0 1px #999;
  background: linear-gradient(#fdfdfd, #d9d9d9 48%, #c6c6c6 50%, #f8f8f8);
}
.dialog footer {
  display: flex;
  justify-content: flex-end;
  gap: 7px;
  margin: 0 6px;
  padding: 5px 10px 11px;
  border-top: 1px solid #aaa;
}
.dialog footer button {
  width: 52px;
  height: 23px;
}
.dialog footer .okb {
  border-color: #2c6a2c;
  background: linear-gradient(#e2f8dc, #a5e29a 48%, #74cf66 50%, #b8f2ab);
}

/* note over the model */
.callout-lines {
  position: absolute;
  left: 550px;
  top: 83px;
  width: 690px;
  height: 180px;
  filter: drop-shadow(2px 3px 2px rgba(0,0,0,0.5));
}
.callout {
  position: absolute;
  left: 866px;
  top: 94px;
  width: 190px;
  height: 43px;
  padding-right: 6px;
  border: 2px solid #b5201c;
  background-color: #ffffcc;
  color: #c81e14;
  font-family: "Liberation Sans", "Noto Sans CJK SC", sans-serif;
  font-size: 22px;
  font-weight: 700;
  line-height: 38px;
  text-align: center;
  box-shadow: 3px 3px 4px rgba(0,0,0,0.5);
}

/* bottom */
.row.bottom {
  height: 35px;
  background: linear-gradient(#ececec, #cfcfcf);
}
.bottom .bar {
  padding-bottom: 4px;
}
.bottom .bar button {
  opacity: .900;
}
.bottom .bar:first-child {
  padding-left: 4px;
}
.bottom .last {
  padding-left: 9px;
}
.status {
  height: 22px;
  flex: none;
  display: flex;
  align-items: center;
  padding-left: 3px;
  background-color: #d9d9d9;
  border-top: 1px solid #fafafa;
  border-bottom: 2px solid #999;
}
.msg {
  width: 910px;
  border-right: 1px solid #fff;
  line-height: 19px;
}
.cell {
  height: 19px;
  border-left: 1px solid #fff;
}
.w1 { width: 20px; }
.w2 { width: 56px; padding-left: 3px; }
.w3 { width: 18px; }
.cell svg {
  width: 18px;
  height: 18px;
}

.stamp {
  position: absolute;
  left: 11px;
  bottom: 8px;
  width: 118px;
  height: 122px;
}
.s1 {
  font-size: 18px;
  font-weight: 700;
  fill: #f00a0a;
}
.s2 {
  font-size: 10px;
  font-weight: 700;
  fill: #fff;
}
```
